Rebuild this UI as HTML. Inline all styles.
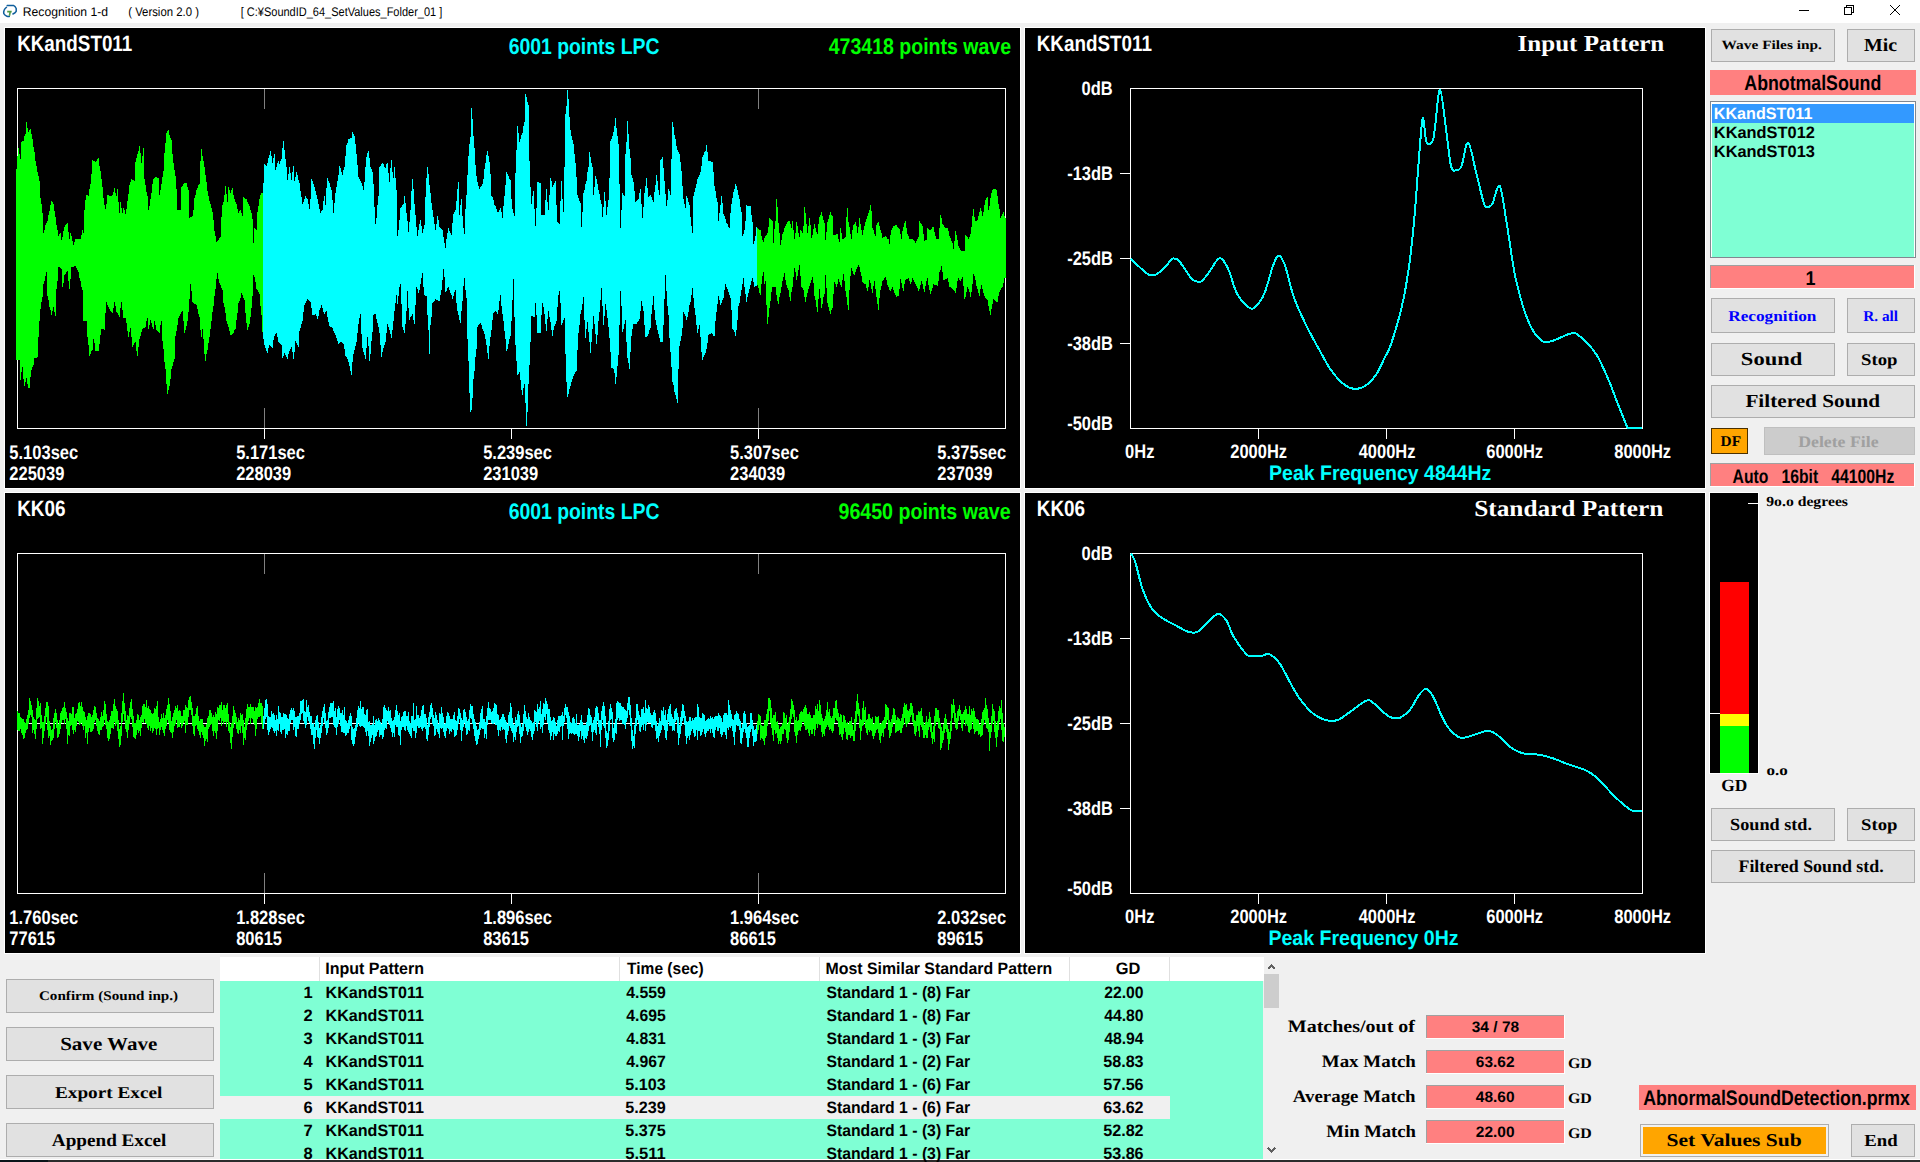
<!DOCTYPE html><html><head><meta charset="utf-8"><title>Recognition 1-d</title><style>html,body{margin:0;padding:0;background:#f0f0f0;width:1920px;height:1162px;overflow:hidden}svg{display:block}text{shape-rendering:auto}</style></head><body><svg width="1920" height="1162" viewBox="0 0 1920 1162" shape-rendering="crispEdges" text-rendering="geometricPrecision"><rect x="0" y="0" width="1920" height="1162" fill="#f0f0f0"/>
<rect x="0" y="0" width="1920" height="23" fill="#fff"/>
<rect x="0" y="1159" width="1920" height="1" fill="#fff"/>
<rect x="0" y="1160" width="1920" height="2" fill="#2b2b2b"/>
<rect x="0" y="1160" width="48" height="2" fill="#0a1419"/>
<g fill="none" stroke="#0f5e9c" stroke-width="1.5" stroke-linecap="round" stroke-linejoin="round" shape-rendering="auto"><path d="M7.2 5.4 H13.4 Q15.2 6.2 16.2 8.5 V11.3 Q15.2 12.9 12.9 14"/><path d="M6.5 7.3 Q4.8 8.8 4.2 10 Q3.4 12 3.8 13.6 Q5 15.6 6.9 16.2 Q8 16.6 9.3 16.5"/></g>
<path d="M7.2 11.6 H11.7 M10.2 11.8 L9.4 15.8" stroke="#4f9a45" stroke-width="1.6" fill="none" shape-rendering="auto"/>
<rect x="1799" y="9.5" width="10" height="1" fill="#000"/>
<path d="M1844.5 7.5 h7 v7 h-7 z M1846.5 7.5 v-2 h7 v7 h-2" fill="none" stroke="#000" stroke-width="1"/>
<path d="M1890 5 L1900 15 M1900 5 L1890 15" stroke="#000" stroke-width="1.1"/>
<rect x="4.5" y="27.5" width="1016" height="461" fill="#000" stroke="#fff" stroke-width="1"/>
<rect x="1024.5" y="27.5" width="681" height="461" fill="#000" stroke="#fff" stroke-width="1"/>
<rect x="4.5" y="492.5" width="1016" height="461" fill="#000" stroke="#fff" stroke-width="1"/>
<rect x="1024.5" y="492.5" width="681" height="461" fill="#000" stroke="#fff" stroke-width="1"/>
<rect x="264" y="89" width="1" height="20" fill="#808080"/>
<rect x="264" y="408" width="1" height="20" fill="#808080"/>
<rect x="264" y="429" width="1" height="10" fill="#fff"/>
<rect x="511" y="429" width="1" height="10" fill="#fff"/>
<rect x="758" y="89" width="1" height="20" fill="#808080"/>
<rect x="758" y="408" width="1" height="20" fill="#808080"/>
<rect x="758" y="429" width="1" height="10" fill="#fff"/>
<rect x="17.5" y="88.5" width="988" height="340" fill="none" stroke="#fff" stroke-width="1"/>
<rect x="264" y="554" width="1" height="20" fill="#808080"/>
<rect x="264" y="873" width="1" height="20" fill="#808080"/>
<rect x="264" y="894" width="1" height="10" fill="#fff"/>
<rect x="511" y="894" width="1" height="10" fill="#fff"/>
<rect x="758" y="554" width="1" height="20" fill="#808080"/>
<rect x="758" y="873" width="1" height="20" fill="#808080"/>
<rect x="758" y="894" width="1" height="10" fill="#fff"/>
<rect x="17.5" y="553.5" width="988" height="340" fill="none" stroke="#fff" stroke-width="1"/>
<rect x="17" y="723" width="988" height="1" fill="#fff"/>
<path d="M16 169 H16 V169 H17 H17 V156 H18 H18 V148 H19 H19 V154 H20 H20 V159 H21 H21 V142 H22 H22 V141 H23 H23 V141 H24 H24 V136 H25 H25 V134 H26 H26 V122 H27 H27 V128 H28 H28 V132 H29 H29 V130 H30 H30 V129 H31 H31 V134 H32 H32 V139 H33 H33 V147 H34 H34 V152 H35 H35 V161 H36 H36 V166 H37 H37 V172 H38 H38 V176 H39 H39 V181 H40 H40 V198 H41 H41 V204 H42 H42 V213 H43 H43 V233 H44 H44 V230 H45 H45 V225 H46 H46 V223 H47 H47 V221 H48 H48 V215 H49 H49 V211 H50 H50 V205 H51 H51 V201 H52 H52 V202 H53 H53 V204 H54 H54 V211 H55 H55 V217 H56 H56 V225 H57 H57 V230 H58 H58 V236 H59 H59 V234 H60 H60 V233 H61 H61 V240 H62 H62 V237 H63 H63 V231 H64 H64 V227 H65 H65 V225 H66 H66 V224 H67 H67 V223 H68 H68 V232 H69 H69 V239 H70 H70 V233 H71 H71 V236 H72 H72 V241 H73 H73 V245 H74 H74 V242 H75 H75 V239 H76 H76 V239 H77 H77 V239 H78 H78 V239 H79 H79 V239 H80 H80 V239 H81 H81 V235 H82 H82 V230 H83 H83 V233 H84 H84 V210 H85 H85 V200 H86 H86 V195 H87 H87 V195 H88 H88 V196 H89 H89 V189 H90 H90 V184 H91 H91 V174 H92 H92 V160 H93 H93 V161 H94 H94 V161 H95 H95 V162 H96 H96 V161 H97 H97 V159 H98 H98 V158 H99 H99 V166 H100 H100 V171 H101 H101 V179 H102 H102 V187 H103 H103 V198 H104 H104 V205 H105 H105 V209 H106 H106 V204 H107 H107 V195 H108 H108 V195 H109 H109 V196 H110 H110 V196 H111 H111 V196 H112 H112 V195 H113 H113 V192 H114 H114 V188 H115 H115 V193 H116 H116 V196 H117 H117 V189 H118 H118 V202 H119 H119 V213 H120 H120 V202 H121 H121 V208 H122 H122 V213 H123 H123 V208 H124 H124 V210 H125 H125 V214 H126 H126 V209 H127 H127 V201 H128 H128 V194 H129 H129 V185 H130 H130 V182 H131 H131 V179 H132 H132 V180 H133 H133 V180 H134 H134 V181 H135 H135 V162 H136 H136 V158 H137 H137 V154 H138 H138 V151 H139 H139 V146 H140 H140 V153 H141 H141 V163 H142 H142 V156 H143 H143 V148 H144 H144 V179 H145 H145 V185 H146 H146 V192 H147 H147 V196 H148 H148 V210 H149 H149 V206 H150 H150 V199 H151 H151 V193 H152 H152 V184 H153 H153 V179 H154 H154 V178 H155 H155 V177 H156 H156 V177 H157 H157 V178 H158 H158 V178 H159 H159 V195 H160 H160 V190 H161 H161 V184 H162 H162 V177 H163 H163 V171 H164 H164 V153 H165 H165 V143 H166 H166 V133 H167 H167 V131 H168 H168 V130 H169 H169 V135 H170 H170 V138 H171 H171 V140 H172 H172 V154 H173 H173 V163 H174 H174 V170 H175 H175 V176 H176 H176 V189 H177 H177 V210 H178 H178 V210 H179 H179 V210 H180 H180 V210 H181 H181 V187 H182 H182 V186 H183 H183 V184 H184 H184 V183 H185 H185 V183 H186 H186 V183 H187 H187 V187 H188 H188 V190 H189 H189 V218 H190 H190 V217 H191 H191 V217 H192 H192 V216 H193 H193 V210 H194 H194 V198 H195 H195 V195 H196 H196 V190 H197 H197 V188 H198 H198 V185 H199 H199 V184 H200 H200 V161 H201 H201 V149 H202 H202 V156 H203 H203 V161 H204 H204 V167 H205 H205 V175 H206 H206 V182 H207 H207 V191 H208 H208 V196 H209 H209 V201 H210 H210 V204 H211 H211 V208 H212 H212 V212 H213 H213 V220 H214 H214 V231 H215 H215 V236 H216 H216 V242 H217 H217 V241 H218 H218 V240 H219 H219 V238 H220 H220 V237 H221 H221 V217 H222 H222 V205 H223 H223 V202 H224 H224 V195 H225 H225 V186 H226 H226 V194 H227 H227 V202 H228 H228 V187 H229 H229 V190 H230 H230 V193 H231 H231 V190 H232 H232 V188 H233 H233 V195 H234 H234 V199 H235 H235 V202 H236 H236 V204 H237 H237 V209 H238 H238 V213 H239 H239 V211 H240 H240 V210 H241 H241 V213 H242 H242 V216 H243 H243 V197 H244 H244 V198 H245 H245 V199 H246 H246 V199 H247 H247 V202 H248 H248 V204 H249 H249 V206 H250 H250 V210 H251 H251 V213 H252 H252 V219 H253 H253 V243 H254 H254 V228 H255 H255 V229 H256 H256 V230 H257 H257 V212 H258 H258 V206 H259 H259 V199 H260 H260 V195 H261 H261 V193 H262 H262 V193 H263 V332 H262 V315 H261 V306 H260 V294 H259 V292 H258 V290 H257 V289 H256 V282 H255 V277 H254 V275 H253 V296 H252 V308 H251 V317 H250 V324 H249 V327 H248 V330 H247 V323 H246 V313 H245 V300 H244 V298 H243 V295 H242 V293 H241 V298 H240 V301 H239 V303 H238 V313 H237 V320 H236 V329 H235 V330 H234 V333 H233 V334 H232 V335 H231 V335 H230 V331 H229 V327 H228 V324 H227 V321 H226 V313 H225 V307 H224 V303 H223 V290 H222 V288 H221 V285 H220 V283 H219 V279 H218 V273 H217 V279 H216 V289 H215 V296 H214 V306 H213 V312 H212 V321 H211 V329 H210 V337 H209 V343 H208 V350 H207 V354 H206 V361 H205 V354 H204 V339 H203 V329 H202 V337 H201 V330 H200 V317 H199 V314 H198 V309 H197 V305 H196 V304 H195 V304 H194 V303 H193 V302 H192 V291 H191 V284 H190 V299 H189 V312 H188 V321 H187 V326 H186 V330 H185 V333 H184 V321 H183 V311 H182 V312 H181 V314 H180 V316 H179 V318 H178 V325 H177 V331 H176 V336 H175 V359 H174 V362 H173 V366 H172 V369 H171 V379 H170 V386 H169 V390 H168 V394 H167 V384 H166 V369 H165 V362 H164 V349 H163 V341 H162 V321 H161 V325 H160 V333 H159 V332 H158 V331 H157 V330 H156 V325 H155 V321 H154 V329 H153 V327 H152 V323 H151 V320 H150 V325 H149 V329 H148 V318 H147 V321 H146 V327 H145 V328 H144 V328 H143 V329 H142 V332 H141 V336 H140 V339 H139 V347 H138 V356 H137 V351 H136 V342 H135 V343 H134 V345 H133 V347 H132 V337 H131 V328 H130 V332 H129 V337 H128 V331 H127 V323 H126 V318 H125 V318 H124 V318 H123 V310 H122 V302 H121 V308 H120 V317 H119 V315 H118 V313 H117 V312 H116 V306 H115 V302 H114 V308 H113 V313 H112 V312 H111 V311 H110 V309 H109 V307 H108 V305 H107 V302 H106 V313 H105 V330 H104 V329 H103 V329 H102 V329 H101 V335 H100 V344 H99 V351 H98 V351 H97 V351 H96 V351 H95 V343 H94 V339 H93 V350 H92 V351 H91 V354 H90 V356 H89 V345 H88 V337 H87 V321 H86 V321 H85 V321 H84 V321 H83 V290 H82 V287 H81 V281 H80 V278 H79 V272 H78 V270 H77 V268 H76 V266 H75 V266 H74 V267 H73 V267 H72 V267 H71 V279 H70 V289 H69 V281 H68 V271 H67 V272 H66 V274 H65 V275 H64 V283 H63 V287 H62 V269 H61 V268 H60 V267 H59 V267 H58 V281 H57 V289 H56 V316 H55 V312 H54 V307 H53 V311 H52 V315 H51 V310 H50 V307 H49 V300 H48 V296 H47 V272 H46 V276 H45 V281 H44 V284 H43 V297 H42 V302 H41 V309 H40 V321 H39 V337 H38 V357 H37 V358 H36 V358 H35 V358 H34 V365 H33 V367 H32 V370 H31 V377 H30 V388 H29 V388 H28 V384 H27 V378 H26 V382 H25 V386 H24 V379 H23 V367 H22 V372 H21 V380 H20 V360 H19 V360 H18 V360 H17 V360 H16 Z" fill="#0f0"/>
<path d="M263 183 H263 V183 H264 H264 V164 H265 H265 V165 H266 H266 V166 H267 H267 V163 H268 H268 V158 H269 H269 V155 H270 H270 V151 H271 H271 V156 H272 H272 V163 H273 H273 V158 H274 H274 V154 H275 H275 V170 H276 H276 V167 H277 H277 V163 H278 H278 V161 H279 H279 V164 H280 H280 V161 H281 H281 V159 H282 H282 V148 H283 H283 V141 H284 H284 V150 H285 H285 V159 H286 H286 V167 H287 H287 V180 H288 H288 V174 H289 H289 V167 H290 H290 V173 H291 H291 V180 H292 H292 V172 H293 H293 V166 H294 H294 V181 H295 H295 V177 H296 H296 V172 H297 H297 V175 H298 H298 V180 H299 H299 V183 H300 H300 V191 H301 H301 V197 H302 H302 V204 H303 H303 V202 H304 H304 V199 H305 H305 V196 H306 H306 V198 H307 H307 V199 H308 H308 V204 H309 H309 V209 H310 H310 V199 H311 H311 V179 H312 H312 V181 H313 H313 V184 H314 H314 V187 H315 H315 V191 H316 H316 V195 H317 H317 V199 H318 H318 V204 H319 H319 V209 H320 H320 V213 H321 H321 V211 H322 H322 V210 H323 H323 V201 H324 H324 V196 H325 H325 V205 H326 H326 V188 H327 H327 V178 H328 H328 V181 H329 H329 V183 H330 H330 V187 H331 H331 V190 H332 H332 V200 H333 H333 V213 H334 H334 V203 H335 H335 V193 H336 H336 V187 H337 H337 V181 H338 H338 V175 H339 H339 V166 H340 H340 V168 H341 H341 V172 H342 H342 V175 H343 H343 V170 H344 H344 V167 H345 H345 V156 H346 H346 V145 H347 H347 V143 H348 H348 V139 H349 H349 V139 H350 H350 V138 H351 H351 V138 H352 H352 V132 H353 H353 V134 H354 H354 V136 H355 H355 V144 H356 H356 V154 H357 H357 V165 H358 H358 V177 H359 H359 V179 H360 H360 V181 H361 H361 V183 H362 H362 V186 H363 H363 V190 H364 H364 V182 H365 H365 V167 H366 H366 V157 H367 H367 V153 H368 H368 V151 H369 H369 V158 H370 H370 V167 H371 H371 V169 H372 H372 V172 H373 H373 V184 H374 H374 V207 H375 H375 V224 H376 H376 V218 H377 H377 V205 H378 H378 V196 H379 H379 V167 H380 H380 V166 H381 H381 V164 H382 H382 V163 H383 H383 V164 H384 H384 V167 H385 H385 V168 H386 H386 V164 H387 H387 V163 H388 H388 V173 H389 H389 V182 H390 H390 V168 H391 H391 V160 H392 H392 V172 H393 H393 V178 H394 H394 V167 H395 H395 V178 H396 H396 V190 H397 H397 V236 H398 H398 V230 H399 H399 V220 H400 H400 V208 H401 H401 V207 H402 H402 V205 H403 H403 V204 H404 H404 V196 H405 H405 V203 H406 H406 V213 H407 H407 V221 H408 H408 V232 H409 H409 V222 H410 H410 V210 H411 H411 V191 H412 H412 V179 H413 H413 V189 H414 H414 V204 H415 H415 V215 H416 H416 V227 H417 H417 V236 H418 H418 V230 H419 H419 V224 H420 H420 V220 H421 H421 V226 H422 H422 V233 H423 H423 V229 H424 H424 V225 H425 H425 V197 H426 H426 V178 H427 H427 V167 H428 H428 V174 H429 H429 V185 H430 H430 V193 H431 H431 V203 H432 H432 V210 H433 H433 V217 H434 H434 V224 H435 H435 V230 H436 H436 V224 H437 H437 V216 H438 H438 V220 H439 H439 V227 H440 H440 V228 H441 H441 V229 H442 H442 V230 H443 H443 V237 H444 H444 V243 H445 H445 V248 H446 H446 V239 H447 H447 V233 H448 H448 V228 H449 H449 V231 H450 H450 V233 H451 H451 V235 H452 H452 V223 H453 H453 V214 H454 H454 V212 H455 H455 V210 H456 H456 V201 H457 H457 V189 H458 H458 V182 H459 H459 V215 H460 H460 V205 H461 H461 V199 H462 H462 V216 H463 H463 V228 H464 H464 V234 H465 H465 V209 H466 H466 V195 H467 H467 V175 H468 H468 V156 H469 H469 V144 H470 H470 V137 H471 H471 V108 H472 H472 V119 H473 H473 V136 H474 H474 V148 H475 H475 V165 H476 H476 V176 H477 H477 V182 H478 H478 V186 H479 H479 V189 H480 H480 V187 H481 H481 V186 H482 H482 V184 H483 H483 V179 H484 H484 V169 H485 H485 V163 H486 H486 V155 H487 H487 V151 H488 H488 V156 H489 H489 V162 H490 H490 V174 H491 H491 V196 H492 H492 V197 H493 H493 V200 H494 H494 V205 H495 H495 V206 H496 H496 V209 H497 H497 V212 H498 H498 V212 H499 H499 V210 H500 H500 V208 H501 H501 V212 H502 H502 V218 H503 H503 V206 H504 H504 V196 H505 H505 V185 H506 H506 V172 H507 H507 V174 H508 H508 V176 H509 H509 V179 H510 H510 V180 H511 H511 V199 H512 H512 V209 H513 H513 V213 H514 H514 V216 H515 H515 V173 H516 H516 V150 H517 H517 V126 H518 H518 V133 H519 H519 V142 H520 H520 V139 H521 H521 V135 H522 H522 V133 H523 H523 V126 H524 H524 V122 H525 H525 V94 H526 H526 V97 H527 H527 V102 H528 H528 V105 H529 H529 V161 H530 H530 V187 H531 H531 V204 H532 H532 V196 H533 H533 V191 H534 H534 V209 H535 H535 V226 H536 H536 V208 H537 H537 V182 H538 H538 V182 H539 H539 V183 H540 H540 V183 H541 H541 V215 H542 H542 V215 H543 H543 V215 H544 H544 V215 H545 H545 V200 H546 H546 V189 H547 H547 V202 H548 H548 V210 H549 H549 V195 H550 H550 V178 H551 H551 V181 H552 H552 V187 H553 H553 V185 H554 H554 V183 H555 H555 V181 H556 H556 V205 H557 H557 V222 H558 H558 V223 H559 H559 V224 H560 H560 V201 H561 H561 V181 H562 H562 V199 H563 H563 V212 H564 H564 V167 H565 H565 V114 H566 H566 V106 H567 H567 V90 H568 H568 V99 H569 H569 V117 H570 H570 V130 H571 H571 V136 H572 H572 V140 H573 H573 V144 H574 H574 V154 H575 H575 V163 H576 H576 V177 H577 H577 V195 H578 H578 V198 H579 H579 V201 H580 H580 V203 H581 H581 V227 H582 H582 V212 H583 H583 V193 H584 H584 V190 H585 H585 V184 H586 H586 V181 H587 H587 V172 H588 H588 V167 H589 H589 V152 H590 H590 V157 H591 H591 V163 H592 H592 V167 H593 H593 V195 H594 H594 V187 H595 H595 V176 H596 H596 V179 H597 H597 V184 H598 H598 V190 H599 H599 V194 H600 H600 V200 H601 H601 V204 H602 H602 V217 H603 H603 V207 H604 H604 V192 H605 H605 V201 H606 H606 V215 H607 H607 V207 H608 H608 V200 H609 H609 V178 H610 H610 V141 H611 H611 V139 H612 H612 V136 H613 H613 V132 H614 H614 V126 H615 H615 V118 H616 H616 V128 H617 H617 V136 H618 H618 V144 H619 H619 V184 H620 H620 V228 H621 H621 V210 H622 H622 V193 H623 H623 V195 H624 H624 V196 H625 H625 V154 H626 H626 V142 H627 H627 V121 H628 H628 V134 H629 H629 V149 H630 H630 V158 H631 H631 V175 H632 H632 V178 H633 H633 V182 H634 H634 V191 H635 H635 V202 H636 H636 V201 H637 H637 V200 H638 H638 V199 H639 H639 V193 H640 H640 V189 H641 H641 V204 H642 H642 V218 H643 H643 V207 H644 H644 V193 H645 H645 V186 H646 H646 V178 H647 H647 V188 H648 H648 V197 H649 H649 V196 H650 H650 V195 H651 H651 V197 H652 H652 V200 H653 H653 V202 H654 H654 V192 H655 H655 V185 H656 H656 V175 H657 H657 V181 H658 H658 V190 H659 H659 V195 H660 H660 V160 H661 H661 V159 H662 H662 V157 H663 H663 V168 H664 H664 V181 H665 H665 V194 H666 H666 V206 H667 H667 V200 H668 H668 V189 H669 H669 V191 H670 H670 V195 H671 H671 V159 H672 H672 V122 H673 H673 V127 H674 H674 V135 H675 H675 V139 H676 H676 V146 H677 H677 V150 H678 H678 V152 H679 H679 V154 H680 H680 V162 H681 H681 V171 H682 H682 V186 H683 H683 V199 H684 H684 V204 H685 H685 V208 H686 H686 V196 H687 H687 V198 H688 H688 V202 H689 H689 V205 H690 H690 V217 H691 H691 V226 H692 H692 V233 H693 H693 V196 H694 H694 V192 H695 H695 V188 H696 H696 V184 H697 H697 V179 H698 H698 V177 H699 H699 V175 H700 H700 V172 H701 H701 V166 H702 H702 V157 H703 H703 V155 H704 H704 V152 H705 H705 V151 H706 H706 V145 H707 H707 V152 H708 H708 V161 H709 H709 V161 H710 H710 V161 H711 H711 V162 H712 H712 V162 H713 H713 V172 H714 H714 V186 H715 H715 V191 H716 H716 V198 H717 H717 V202 H718 H718 V221 H719 H719 V213 H720 H720 V205 H721 H721 V196 H722 H722 V203 H723 H723 V214 H724 H724 V216 H725 H725 V219 H726 H726 V223 H727 H727 V224 H728 H728 V227 H729 H729 V228 H730 H730 V213 H731 H731 V204 H732 H732 V198 H733 H733 V192 H734 H734 V189 H735 H735 V184 H736 H736 V186 H737 H737 V190 H738 H738 V195 H739 H739 V199 H740 H740 V207 H741 H741 V212 H742 H742 V236 H743 H743 V234 H744 H744 V230 H745 H745 V221 H746 H746 V205 H747 H747 V206 H748 H748 V206 H749 H749 V206 H750 H750 V206 H751 H751 V215 H752 H752 V222 H753 H753 V244 H754 H754 V241 H755 H755 V236 H756 H756 V227 H757 V286 H756 V286 H755 V287 H754 V282 H753 V278 H752 V281 H751 V285 H750 V289 H749 V293 H748 V297 H747 V302 H746 V294 H745 V287 H744 V278 H743 V284 H742 V290 H741 V296 H740 V303 H739 V306 H738 V320 H737 V330 H736 V336 H735 V332 H734 V330 H733 V329 H732 V310 H731 V298 H730 V295 H729 V292 H728 V289 H727 V287 H726 V284 H725 V290 H724 V298 H723 V300 H722 V303 H721 V305 H720 V300 H719 V296 H718 V304 H717 V312 H716 V321 H715 V336 H714 V336 H713 V334 H712 V333 H711 V334 H710 V334 H709 V335 H708 V343 H707 V349 H706 V353 H705 V355 H704 V357 H703 V360 H702 V352 H701 V337 H700 V325 H699 V329 H698 V333 H697 V325 H696 V315 H695 V308 H694 V298 H693 V288 H692 V295 H691 V302 H690 V305 H689 V312 H688 V317 H687 V320 H686 V316 H685 V314 H684 V312 H683 V328 H682 V336 H681 V341 H680 V346 H679 V369 H678 V403 H677 V399 H676 V395 H675 V392 H674 V385 H673 V382 H672 V367 H671 V352 H670 V338 H669 V315 H668 V306 H667 V291 H666 V275 H665 V299 H664 V325 H663 V342 H662 V342 H661 V342 H660 V338 H659 V334 H658 V330 H657 V325 H656 V320 H655 V310 H654 V296 H653 V305 H652 V314 H651 V328 H650 V330 H649 V334 H648 V336 H647 V337 H646 V337 H645 V325 H644 V311 H643 V306 H642 V301 H641 V311 H640 V319 H639 V321 H638 V322 H637 V324 H636 V324 H635 V324 H634 V324 H633 V329 H632 V336 H631 V352 H630 V369 H629 V363 H628 V358 H627 V342 H626 V320 H625 V324 H624 V329 H623 V332 H622 V306 H621 V291 H620 V325 H619 V355 H618 V366 H617 V377 H616 V384 H615 V373 H614 V369 H613 V368 H612 V368 H611 V352 H610 V338 H609 V327 H608 V318 H607 V310 H606 V304 H605 V316 H604 V325 H603 V306 H602 V288 H601 V300 H600 V312 H599 V321 H598 V335 H597 V344 H596 V334 H595 V324 H594 V316 H593 V329 H592 V342 H591 V353 H590 V342 H589 V332 H588 V322 H587 V329 H586 V338 H585 V320 H584 V297 H583 V304 H582 V310 H581 V314 H580 V325 H579 V333 H578 V350 H577 V371 H576 V372 H575 V374 H574 V376 H573 V379 H572 V382 H571 V386 H570 V389 H569 V394 H568 V397 H567 V382 H566 V354 H565 V318 H564 V320 H563 V323 H562 V325 H561 V303 H560 V291 H559 V295 H558 V307 H557 V321 H556 V324 H555 V326 H554 V330 H553 V336 H552 V330 H551 V322 H550 V317 H549 V311 H548 V319 H547 V331 H546 V324 H545 V314 H544 V307 H543 V303 H542 V315 H541 V333 H540 V333 H539 V333 H538 V333 H537 V315 H536 V303 H535 V317 H534 V317 H533 V316 H532 V316 H531 V342 H530 V365 H529 V384 H528 V412 H527 V426 H526 V403 H525 V384 H524 V388 H523 V395 H522 V390 H521 V380 H520 V372 H519 V374 H518 V375 H517 V361 H516 V345 H515 V317 H514 V279 H513 V300 H512 V321 H511 V336 H510 V339 H509 V344 H508 V349 H507 V351 H506 V339 H505 V331 H504 V321 H503 V314 H502 V306 H501 V295 H500 V301 H499 V310 H498 V314 H497 V312 H496 V311 H495 V312 H494 V313 H493 V320 H492 V330 H491 V337 H490 V346 H489 V359 H488 V353 H487 V345 H486 V339 H485 V334 H484 V331 H483 V329 H482 V325 H481 V323 H480 V324 H479 V325 H478 V327 H477 V349 H476 V357 H475 V371 H474 V379 H473 V398 H472 V410 H471 V412 H470 V393 H469 V361 H468 V339 H467 V298 H466 V290 H465 V278 H464 V286 H463 V301 H462 V311 H461 V323 H460 V320 H459 V315 H458 V311 H457 V303 H456 V290 H455 V292 H454 V296 H453 V299 H452 V295 H451 V293 H450 V290 H449 V287 H448 V288 H447 V291 H446 V292 H445 V277 H444 V269 H443 V280 H442 V290 H441 V295 H440 V301 H439 V301 H438 V300 H437 V300 H436 V299 H435 V301 H434 V302 H433 V303 H432 V317 H431 V325 H430 V354 H429 V330 H428 V315 H427 V296 H426 V296 H425 V295 H424 V287 H423 V273 H422 V278 H421 V284 H420 V290 H419 V293 H418 V289 H417 V287 H416 V305 H415 V324 H414 V320 H413 V314 H412 V316 H411 V317 H410 V320 H409 V308 H408 V291 H407 V311 H406 V324 H405 V333 H404 V330 H403 V327 H402 V304 H401 V284 H400 V287 H399 V296 H398 V304 H397 V295 H396 V303 H395 V311 H394 V321 H393 V330 H392 V338 H391 V334 H390 V330 H389 V327 H388 V324 H387 V333 H386 V342 H385 V345 H384 V348 H383 V352 H382 V357 H381 V345 H380 V333 H379 V327 H378 V323 H377 V319 H376 V314 H375 V314 H374 V315 H373 V332 H372 V341 H371 V354 H370 V361 H369 V346 H368 V337 H367 V348 H366 V359 H365 V355 H364 V352 H363 V348 H362 V334 H361 V314 H360 V318 H359 V324 H358 V333 H357 V342 H356 V346 H355 V350 H354 V354 H353 V362 H352 V375 H351 V371 H350 V366 H349 V362 H348 V359 H347 V357 H346 V356 H345 V349 H344 V344 H343 V343 H342 V342 H341 V342 H340 V343 H339 V344 H338 V341 H337 V338 H336 V335 H335 V333 H334 V331 H333 V328 H332 V327 H331 V327 H330 V326 H329 V322 H328 V317 H327 V311 H326 V312 H325 V314 H324 V312 H323 V308 H322 V305 H321 V308 H320 V310 H319 V316 H318 V319 H317 V316 H316 V314 H315 V315 H314 V315 H313 V315 H312 V308 H311 V302 H310 V301 H309 V300 H308 V299 H307 V301 H306 V303 H305 V305 H304 V312 H303 V321 H302 V324 H301 V328 H300 V331 H299 V347 H298 V345 H297 V343 H296 V341 H295 V352 H294 V359 H293 V352 H292 V347 H291 V349 H290 V351 H289 V354 H288 V359 H287 V357 H286 V355 H285 V353 H284 V356 H283 V358 H282 V345 H281 V344 H280 V343 H279 V342 H278 V337 H277 V333 H276 V334 H275 V336 H274 V340 H273 V348 H272 V347 H271 V346 H270 V345 H269 V348 H268 V353 H267 V351 H266 V348 H265 V345 H264 V339 H263 Z" fill="#0ff"/>
<path d="M757 228 H757 V228 H758 H758 V229 H759 H759 V230 H760 H760 V230 H761 H761 V236 H762 H762 V240 H763 H763 V242 H764 H764 V238 H765 H765 V236 H766 H766 V235 H767 H767 V233 H768 H768 V227 H769 H769 V218 H770 H770 V219 H771 H771 V220 H772 H772 V221 H773 H773 V243 H774 H774 V229 H775 H775 V221 H776 H776 V199 H777 H777 V207 H778 H778 V223 H779 H779 V233 H780 H780 V245 H781 H781 V240 H782 H782 V234 H783 H783 V232 H784 H784 V228 H785 H785 V226 H786 H786 V224 H787 H787 V222 H788 H788 V221 H789 H789 V221 H790 H790 V224 H791 H791 V228 H792 H792 V221 H793 H793 V230 H794 H794 V239 H795 H795 V233 H796 H796 V222 H797 H797 V226 H798 H798 V233 H799 H799 V237 H800 H800 V230 H801 H801 V231 H802 H802 V233 H803 H803 V226 H804 H804 V207 H805 H805 V213 H806 H806 V224 H807 H807 V233 H808 H808 V226 H809 H809 V218 H810 H810 V225 H811 H811 V238 H812 H812 V235 H813 H813 V229 H814 H814 V224 H815 H815 V228 H816 H816 V232 H817 H817 V234 H818 H818 V224 H819 H819 V217 H820 H820 V215 H821 H821 V212 H822 H822 V216 H823 H823 V220 H824 H824 V223 H825 H825 V240 H826 H826 V232 H827 H827 V222 H828 H828 V219 H829 H829 V215 H830 H830 V212 H831 H831 V215 H832 H832 V216 H833 H833 V235 H834 H834 V235 H835 H835 V235 H836 H836 V234 H837 H837 V234 H838 H838 V239 H839 H839 V242 H840 H840 V228 H841 H841 V233 H842 H842 V239 H843 H843 V239 H844 H844 V238 H845 H845 V237 H846 H846 V217 H847 H847 V208 H848 H848 V222 H849 H849 V227 H850 H850 V234 H851 H851 V239 H852 H852 V230 H853 H853 V225 H854 H854 V224 H855 H855 V222 H856 H856 V226 H857 H857 V233 H858 H858 V227 H859 H859 V218 H860 H860 V224 H861 H861 V230 H862 H862 V235 H863 H863 V230 H864 H864 V226 H865 H865 V222 H866 H866 V219 H867 H867 V216 H868 H868 V213 H869 H869 V210 H870 H870 V205 H871 H871 V211 H872 H872 V228 H873 H873 V230 H874 H874 V234 H875 H875 V236 H876 H876 V225 H877 H877 V223 H878 H878 V222 H879 H879 V226 H880 H880 V230 H881 H881 V233 H882 H882 V238 H883 H883 V237 H884 H884 V237 H885 H885 V236 H886 H886 V237 H887 H887 V239 H888 H888 V239 H889 H889 V244 H890 H890 V235 H891 H891 V230 H892 H892 V228 H893 H893 V226 H894 H894 V226 H895 H895 V225 H896 H896 V225 H897 H897 V227 H898 H898 V228 H899 H899 V229 H900 H900 V234 H901 H901 V239 H902 H902 V231 H903 H903 V227 H904 H904 V223 H905 H905 V221 H906 H906 V228 H907 H907 V234 H908 H908 V236 H909 H909 V239 H910 H910 V239 H911 H911 V239 H912 H912 V239 H913 H913 V240 H914 H914 V241 H915 H915 V243 H916 H916 V241 H917 H917 V239 H918 H918 V237 H919 H919 V221 H920 H920 V223 H921 H921 V224 H922 H922 V226 H923 H923 V234 H924 H924 V241 H925 H925 V240 H926 H926 V240 H927 H927 V228 H928 H928 V229 H929 H929 V230 H930 H930 V230 H931 H931 V229 H932 H932 V227 H933 H933 V227 H934 H934 V232 H935 H935 V236 H936 H936 V239 H937 H937 V239 H938 H938 V239 H939 H939 V228 H940 H940 V215 H941 H941 V218 H942 H942 V224 H943 H943 V225 H944 H944 V227 H945 H945 V228 H946 H946 V228 H947 H947 V228 H948 H948 V231 H949 H949 V236 H950 H950 V238 H951 H951 V241 H952 H952 V243 H953 H953 V249 H954 H954 V241 H955 H955 V231 H956 H956 V235 H957 H957 V240 H958 H958 V246 H959 H959 V248 H960 H960 V250 H961 H961 V251 H962 H962 V251 H963 H963 V251 H964 H964 V251 H965 H965 V235 H966 H966 V236 H967 H967 V237 H968 H968 V239 H969 H969 V237 H970 H970 V234 H971 H971 V227 H972 H972 V216 H973 H973 V209 H974 H974 V217 H975 H975 V221 H976 H976 V221 H977 H977 V220 H978 H978 V216 H979 H979 V212 H980 H980 V208 H981 H981 V211 H982 H982 V216 H983 H983 V212 H984 H984 V205 H985 H985 V200 H986 H986 V198 H987 H987 V197 H988 H988 V210 H989 H989 V206 H990 H990 V198 H991 H991 V193 H992 H992 V190 H993 H993 V189 H994 H994 V189 H995 H995 V189 H996 H996 V190 H997 H997 V196 H998 H998 V204 H999 H999 V209 H1000 H1000 V218 H1001 H1001 V216 H1002 H1002 V214 H1003 H1003 V212 H1004 H1004 V216 H1005 H1005 V218 H1006 V278 H1005 V278 H1004 V283 H1003 V287 H1002 V288 H1001 V290 H1000 V292 H999 V296 H998 V302 H997 V302 H996 V301 H995 V300 H994 V299 H993 V304 H992 V309 H991 V315 H990 V311 H989 V306 H988 V300 H987 V299 H986 V298 H985 V296 H984 V293 H983 V289 H982 V285 H981 V289 H980 V296 H979 V293 H978 V289 H977 V286 H976 V280 H975 V276 H974 V274 H973 V284 H972 V292 H971 V297 H970 V292 H969 V289 H968 V287 H967 V292 H966 V297 H965 V299 H964 V286 H963 V277 H962 V279 H961 V281 H960 V280 H959 V278 H958 V281 H957 V288 H956 V293 H955 V291 H954 V290 H953 V289 H952 V288 H951 V287 H950 V287 H949 V282 H948 V278 H947 V279 H946 V279 H945 V280 H944 V280 H943 V272 H942 V266 H941 V270 H940 V272 H939 V281 H938 V286 H937 V285 H936 V285 H935 V285 H934 V284 H933 V288 H932 V291 H931 V294 H930 V290 H929 V285 H928 V278 H927 V281 H926 V286 H925 V292 H924 V289 H923 V284 H922 V281 H921 V285 H920 V289 H919 V291 H918 V288 H917 V286 H916 V284 H915 V282 H914 V280 H913 V278 H912 V282 H911 V284 H910 V281 H909 V278 H908 V279 H907 V279 H906 V280 H905 V284 H904 V291 H903 V288 H902 V283 H901 V279 H900 V289 H899 V296 H898 V296 H897 V297 H896 V295 H895 V293 H894 V290 H893 V287 H892 V289 H891 V291 H890 V290 H889 V287 H888 V285 H887 V280 H886 V277 H885 V278 H884 V280 H883 V281 H882 V286 H881 V290 H880 V298 H879 V310 H878 V304 H877 V297 H876 V289 H875 V281 H874 V286 H873 V293 H872 V289 H871 V283 H870 V280 H869 V287 H868 V291 H867 V288 H866 V284 H865 V284 H864 V283 H863 V282 H862 V276 H861 V272 H860 V267 H859 V265 H858 V267 H857 V269 H856 V272 H855 V275 H854 V274 H853 V271 H852 V268 H851 V276 H850 V290 H849 V310 H848 V305 H847 V297 H846 V291 H845 V281 H844 V274 H843 V280 H842 V287 H841 V285 H840 V282 H839 V279 H838 V284 H837 V287 H836 V284 H835 V282 H834 V294 H833 V308 H832 V310 H831 V314 H830 V311 H829 V307 H828 V303 H827 V288 H826 V275 H825 V294 H824 V297 H823 V304 H822 V308 H821 V298 H820 V289 H819 V299 H818 V312 H817 V307 H816 V300 H815 V296 H814 V283 H813 V277 H812 V280 H811 V283 H810 V286 H809 V289 H808 V293 H807 V297 H806 V302 H805 V297 H804 V290 H803 V288 H802 V287 H801 V276 H800 V265 H799 V270 H798 V276 H797 V280 H796 V272 H795 V268 H794 V277 H793 V287 H792 V292 H791 V301 H790 V297 H789 V290 H788 V288 H787 V285 H786 V280 H785 V273 H784 V277 H783 V281 H782 V287 H781 V293 H780 V297 H779 V304 H778 V301 H777 V295 H776 V287 H775 V287 H774 V287 H773 V287 H772 V292 H771 V301 H770 V308 H769 V317 H768 V324 H767 V305 H766 V281 H765 V284 H764 V272 H763 V276 H762 V284 H761 V295 H760 V293 H759 V288 H758 V285 H757 Z" fill="#0f0"/>
<path d="M17 711 H17 V711 H18 H18 V713 H19 H19 V713 H20 H20 V717 H21 H21 V718 H22 H22 V719 H23 H23 V719 H24 H24 V722 H25 H25 V723 H26 H26 V719 H27 H27 V715 H28 H28 V710 H29 H29 V698 H30 H30 V701 H31 H31 V705 H32 H32 V710 H33 H33 V717 H34 H34 V719 H35 H35 V720 H36 H36 V708 H37 H37 V698 H38 H38 V701 H39 H39 V706 H40 H40 V703 H41 H41 V715 H42 H42 V722 H43 H43 V722 H44 H44 V716 H45 H45 V708 H46 H46 V702 H47 H47 V702 H48 H48 V706 H49 H49 V721 H50 H50 V726 H51 H51 V730 H52 H52 V729 H53 H53 V718 H54 H54 V713 H55 H55 V709 H56 H56 V713 H57 H57 V720 H58 H58 V724 H59 H59 V720 H60 H60 V713 H61 H61 V711 H62 H62 V708 H63 H63 V707 H64 H64 V702 H65 H65 V708 H66 H66 V712 H67 H67 V718 H68 H68 V721 H69 H69 V713 H70 H70 V713 H71 H71 V714 H72 H72 V707 H73 H73 V707 H74 H74 V718 H75 H75 V714 H76 H76 V713 H77 H77 V709 H78 H78 V703 H79 H79 V702 H80 H80 V706 H81 H81 V702 H82 H82 V707 H83 H83 V711 H84 H84 V712 H85 H85 V717 H86 H86 V720 H87 H87 V716 H88 H88 V713 H89 H89 V713 H90 H90 V714 H91 H91 V717 H92 H92 V715 H93 H93 V710 H94 H94 V706 H95 H95 V707 H96 H96 V713 H97 H97 V718 H98 H98 V719 H99 H99 V721 H100 H100 V717 H101 H101 V712 H102 H102 V716 H103 H103 V710 H104 H104 V701 H105 H105 V704 H106 H106 V714 H107 H107 V721 H108 H108 V722 H109 H109 V720 H110 H110 V716 H111 H111 V711 H112 H112 V711 H113 H113 V704 H114 H114 V699 H115 H115 V706 H116 H116 V709 H117 H117 V711 H118 H118 V720 H119 H119 V729 H120 H120 V726 H121 H121 V713 H122 H122 V701 H123 H123 V693 H124 H124 V703 H125 H125 V711 H126 H126 V720 H127 H127 V715 H128 H128 V716 H129 H129 V708 H130 H130 V702 H131 H131 V699 H132 H132 V709 H133 H133 V716 H134 H134 V723 H135 H135 V723 H136 H136 V720 H137 H137 V714 H138 H138 V715 H139 H139 V720 H140 H140 V717 H141 H141 V715 H142 H142 V706 H143 H143 V704 H144 H144 V704 H145 H145 V707 H146 H146 V700 H147 H147 V708 H148 H148 V706 H149 H149 V709 H150 H150 V710 H151 H151 V713 H152 H152 V714 H153 H153 V713 H154 H154 V708 H155 H155 V709 H156 H156 V706 H157 H157 V701 H158 H158 V717 H159 H159 V722 H160 H160 V719 H161 H161 V714 H162 H162 V718 H163 H163 V713 H164 H164 V718 H165 H165 V715 H166 H166 V709 H167 H167 V705 H168 H168 V698 H169 H169 V704 H170 H170 V711 H171 H171 V721 H172 H172 V717 H173 H173 V713 H174 H174 V710 H175 H175 V706 H176 H176 V708 H177 H177 V705 H178 H178 V711 H179 H179 V710 H180 H180 V711 H181 H181 V716 H182 H182 V716 H183 H183 V710 H184 H184 V710 H185 H185 V705 H186 H186 V707 H187 H187 V708 H188 H188 V700 H189 H189 V697 H190 H190 V696 H191 H191 V702 H192 H192 V708 H193 H193 V716 H194 H194 V716 H195 H195 V714 H196 H196 V708 H197 H197 V706 H198 H198 V716 H199 H199 V721 H200 H200 V719 H201 H201 V719 H202 H202 V719 H203 H203 V725 H204 H204 V727 H205 H205 V727 H206 H206 V724 H207 H207 V718 H208 H208 V716 H209 H209 V710 H210 H210 V710 H211 H211 V713 H212 H212 V717 H213 H213 V715 H214 H214 V717 H215 H215 V712 H216 H216 V714 H217 H217 V707 H218 H218 V708 H219 H219 V705 H220 H220 V705 H221 H221 V702 H222 H222 V710 H223 H223 V705 H224 H224 V705 H225 H225 V708 H226 H226 V705 H227 H227 V703 H228 H228 V714 H229 H229 V722 H230 H230 V727 H231 H231 V723 H232 H232 V716 H233 H233 V706 H234 H234 V710 H235 H235 V713 H236 H236 V717 H237 H237 V722 H238 H238 V718 H239 H239 V720 H240 H240 V713 H241 H241 V715 H242 H242 V714 H243 H243 V720 H244 H244 V727 H245 H245 V718 H246 H246 V709 H247 H247 V704 H248 H248 V707 H249 H249 V707 H250 H250 V704 H251 H251 V707 H252 H252 V707 H253 H253 V707 H254 H254 V711 H255 H255 V707 H256 H256 V708 H257 H257 V707 H258 H258 V703 H259 H259 V699 H260 H260 V703 H261 H261 V703 H262 H262 V706 H263 V729 H262 V723 H261 V716 H260 V717 H259 V717 H258 V719 H257 V729 H256 V736 H255 V725 H254 V723 H253 V719 H252 V718 H251 V724 H250 V718 H249 V721 H248 V725 H247 V730 H246 V740 H245 V738 H244 V745 H243 V733 H242 V726 H241 V733 H240 V730 H239 V734 H238 V733 H237 V729 H236 V724 H235 V723 H234 V728 H233 V737 H232 V749 H231 V743 H230 V733 H229 V731 H228 V722 H227 V727 H226 V722 H225 V722 H224 V724 H223 V721 H222 V726 H221 V718 H220 V721 H219 V720 H218 V731 H217 V739 H216 V733 H215 V731 H214 V736 H213 V731 H212 V724 H211 V725 H210 V727 H209 V729 H208 V742 H207 V739 H206 V741 H205 V746 H204 V738 H203 V735 H202 V732 H201 V738 H200 V735 H199 V731 H198 V729 H197 V725 H196 V726 H195 V736 H194 V734 H193 V726 H192 V715 H191 V710 H190 V710 H189 V717 H188 V725 H187 V725 H186 V733 H185 V721 H184 V723 H183 V726 H182 V728 H181 V723 H180 V727 H179 V727 H178 V728 H177 V720 H176 V724 H175 V726 H174 V732 H173 V738 H172 V733 H171 V732 H170 V730 H169 V723 H168 V720 H167 V726 H166 V729 H165 V736 H164 V733 H163 V730 H162 V727 H161 V730 H160 V735 H159 V728 H158 V729 H157 V735 H156 V729 H155 V728 H154 V731 H153 V733 H152 V728 H151 V731 H150 V726 H149 V730 H148 V728 H147 V724 H146 V723 H145 V719 H144 V723 H143 V722 H142 V728 H141 V736 H140 V731 H139 V733 H138 V730 H137 V735 H136 V739 H135 V738 H134 V737 H133 V727 H132 V719 H131 V717 H130 V724 H129 V730 H128 V738 H127 V732 H126 V729 H125 V721 H124 V714 H123 V722 H122 V736 H121 V745 H120 V747 H119 V739 H118 V731 H117 V724 H116 V726 H115 V722 H114 V729 H113 V728 H112 V728 H111 V734 H110 V739 H109 V741 H108 V738 H107 V729 H106 V725 H105 V720 H104 V726 H103 V727 H102 V730 H101 V730 H100 V735 H99 V734 H98 V731 H97 V726 H96 V720 H95 V722 H94 V729 H93 V731 H92 V732 H91 V732 H90 V728 H89 V732 H88 V744 H87 V733 H86 V738 H85 V726 H84 V730 H83 V726 H82 V723 H81 V724 H80 V725 H79 V722 H78 V721 H77 V726 H76 V732 H75 V730 H74 V734 H73 V730 H72 V725 H71 V726 H70 V736 H69 V735 H68 V744 H67 V729 H66 V719 H65 V724 H64 V720 H63 V720 H62 V723 H61 V729 H60 V734 H59 V737 H58 V738 H57 V728 H56 V722 H55 V729 H54 V738 H53 V740 H52 V741 H51 V745 H50 V736 H49 V738 H48 V730 H47 V717 H46 V724 H45 V731 H44 V738 H43 V744 H42 V728 H41 V729 H40 V717 H39 V718 H38 V719 H37 V729 H36 V739 H35 V734 H34 V730 H33 V733 H32 V717 H31 V715 H30 V718 H29 V724 H28 V729 H27 V730 H26 V733 H25 V738 H24 V739 H23 V735 H22 V733 H21 V729 H20 V731 H19 V731 H18 V730 H17 Z" fill="#0f0"/>
<path d="M263 716 H263 V716 H264 H264 V708 H265 H265 V700 H266 H266 V699 H267 H267 V704 H268 H268 V716 H269 H269 V717 H270 H270 V717 H271 H271 V711 H272 H272 V714 H273 H273 V713 H274 H274 V715 H275 H275 V720 H276 H276 V715 H277 H277 V719 H278 H278 V706 H279 H279 V712 H280 H280 V713 H281 H281 V717 H282 H282 V717 H283 H283 V713 H284 H284 V714 H285 H285 V714 H286 H286 V715 H287 H287 V718 H288 H288 V719 H289 H289 V714 H290 H290 V710 H291 H291 V708 H292 H292 V710 H293 H293 V708 H294 H294 V711 H295 H295 V717 H296 H296 V717 H297 H297 V716 H298 H298 V716 H299 H299 V713 H300 H300 V701 H301 H301 V701 H302 H302 V700 H303 H303 V699 H304 H304 V711 H305 H305 V712 H306 H306 V700 H307 H307 V707 H308 H308 V705 H309 H309 V712 H310 H310 V716 H311 H311 V716 H312 H312 V724 H313 H313 V723 H314 H314 V727 H315 H315 V720 H316 H316 V716 H317 H317 V715 H318 H318 V722 H319 H319 V728 H320 H320 V725 H321 H321 V717 H322 H322 V711 H323 H323 V707 H324 H324 V704 H325 H325 V713 H326 H326 V721 H327 H327 V720 H328 H328 V712 H329 H329 V707 H330 H330 V703 H331 H331 V703 H332 H332 V703 H333 H333 V701 H334 H334 V711 H335 H335 V708 H336 H336 V717 H337 H337 V709 H338 H338 V706 H339 H339 V708 H340 H340 V713 H341 H341 V713 H342 H342 V710 H343 H343 V715 H344 H344 V707 H345 H345 V720 H346 H346 V721 H347 H347 V723 H348 H348 V720 H349 H349 V716 H350 H350 V713 H351 H351 V716 H352 H352 V727 H353 H353 V729 H354 H354 V728 H355 H355 V725 H356 H356 V718 H357 H357 V710 H358 H358 V706 H359 H359 V708 H360 H360 V701 H361 H361 V709 H362 H362 V707 H363 H363 V707 H364 H364 V714 H365 H365 V715 H366 H366 V710 H367 H367 V709 H368 H368 V722 H369 H369 V721 H370 H370 V725 H371 H371 V725 H372 H372 V724 H373 H373 V716 H374 H374 V725 H375 H375 V720 H376 H376 V719 H377 H377 V721 H378 H378 V718 H379 H379 V720 H380 H380 V722 H381 H381 V724 H382 H382 V719 H383 H383 V707 H384 H384 V705 H385 H385 V708 H386 H386 V710 H387 H387 V711 H388 H388 V707 H389 H389 V711 H390 H390 V710 H391 H391 V718 H392 H392 V721 H393 H393 V720 H394 H394 V717 H395 H395 V710 H396 H396 V705 H397 H397 V711 H398 H398 V715 H399 H399 V713 H400 H400 V721 H401 H401 V717 H402 H402 V716 H403 H403 V712 H404 H404 V711 H405 H405 V711 H406 H406 V716 H407 H407 V716 H408 H408 V712 H409 H409 V721 H410 H410 V723 H411 H411 V716 H412 H412 V716 H413 H413 V703 H414 H414 V720 H415 H415 V719 H416 H416 V706 H417 H417 V715 H418 H418 V715 H419 H419 V718 H420 H420 V716 H421 H421 V710 H422 H422 V706 H423 H423 V705 H424 H424 V714 H425 H425 V714 H426 H426 V718 H427 H427 V725 H428 H428 V717 H429 H429 V712 H430 H430 V705 H431 H431 V703 H432 H432 V708 H433 H433 V715 H434 H434 V718 H435 H435 V712 H436 H436 V715 H437 H437 V720 H438 H438 V724 H439 H439 V713 H440 H440 V714 H441 H441 V707 H442 H442 V713 H443 H443 V717 H444 H444 V724 H445 H445 V723 H446 H446 V716 H447 H447 V712 H448 H448 V713 H449 H449 V716 H450 H450 V719 H451 H451 V719 H452 H452 V719 H453 H453 V715 H454 H454 V712 H455 H455 V720 H456 H456 V721 H457 H457 V716 H458 H458 V708 H459 H459 V709 H460 H460 V713 H461 H461 V718 H462 H462 V720 H463 H463 V710 H464 H464 V709 H465 H465 V712 H466 H466 V717 H467 H467 V721 H468 H468 V719 H469 H469 V710 H470 H470 V704 H471 H471 V706 H472 H472 V706 H473 H473 V714 H474 H474 V719 H475 H475 V722 H476 H476 V726 H477 H477 V730 H478 H478 V729 H479 H479 V722 H480 H480 V713 H481 H481 V709 H482 H482 V706 H483 H483 V719 H484 H484 V719 H485 H485 V722 H486 H486 V716 H487 H487 V708 H488 H488 V702 H489 H489 V708 H490 H490 V709 H491 H491 V712 H492 H492 V711 H493 H493 V708 H494 H494 V703 H495 H495 V704 H496 H496 V705 H497 H497 V714 H498 H498 V715 H499 H499 V720 H500 H500 V719 H501 H501 V717 H502 H502 V714 H503 H503 V714 H504 H504 V717 H505 H505 V720 H506 H506 V722 H507 H507 V724 H508 H508 V715 H509 H509 V712 H510 H510 V703 H511 H511 V707 H512 H512 V718 H513 H513 V724 H514 H514 V725 H515 H515 V717 H516 H516 V720 H517 H517 V714 H518 H518 V711 H519 H519 V715 H520 H520 V723 H521 H521 V727 H522 H522 V724 H523 H523 V714 H524 H524 V705 H525 H525 V711 H526 H526 V717 H527 H527 V719 H528 H528 V713 H529 H529 V717 H530 H530 V720 H531 H531 V721 H532 H532 V723 H533 H533 V722 H534 H534 V710 H535 H535 V711 H536 H536 V712 H537 H537 V704 H538 H538 V709 H539 H539 V707 H540 H540 V701 H541 H541 V714 H542 H542 V709 H543 H543 V703 H544 H544 V704 H545 H545 V698 H546 H546 V701 H547 H547 V704 H548 H548 V709 H549 H549 V709 H550 H550 V717 H551 H551 V721 H552 H552 V720 H553 H553 V717 H554 H554 V718 H555 H555 V722 H556 H556 V726 H557 H557 V720 H558 H558 V716 H559 H559 V716 H560 H560 V716 H561 H561 V715 H562 H562 V712 H563 H563 V716 H564 H564 V708 H565 H565 V704 H566 H566 V707 H567 H567 V707 H568 H568 V712 H569 H569 V716 H570 H570 V722 H571 H571 V723 H572 H572 V718 H573 H573 V717 H574 H574 V719 H575 H575 V723 H576 H576 V714 H577 H577 V725 H578 H578 V725 H579 H579 V724 H580 H580 V720 H581 H581 V715 H582 H582 V722 H583 H583 V725 H584 H584 V725 H585 H585 V725 H586 H586 V722 H587 H587 V715 H588 H588 V708 H589 H589 V709 H590 H590 V715 H591 H591 V717 H592 H592 V723 H593 H593 V720 H594 H594 V717 H595 H595 V708 H596 H596 V706 H597 H597 V707 H598 H598 V713 H599 H599 V720 H600 H600 V720 H601 H601 V711 H602 H602 V706 H603 H603 V702 H604 H604 V706 H605 H605 V716 H606 H606 V731 H607 H607 V733 H608 H608 V721 H609 H609 V709 H610 H610 V704 H611 H611 V708 H612 H612 V712 H613 H613 V728 H614 H614 V724 H615 H615 V719 H616 H616 V703 H617 H617 V701 H618 H618 V702 H619 H619 V703 H620 H620 V703 H621 H621 V706 H622 H622 V707 H623 H623 V707 H624 H624 V709 H625 H625 V710 H626 H626 V711 H627 H627 V703 H628 H628 V697 H629 H629 V697 H630 H630 V705 H631 H631 V718 H632 H632 V730 H633 H633 V736 H634 H634 V725 H635 H635 V718 H636 H636 V704 H637 H637 V704 H638 H638 V711 H639 H639 V715 H640 H640 V717 H641 H641 V709 H642 H642 V709 H643 H643 V707 H644 H644 V713 H645 H645 V700 H646 H646 V708 H647 H647 V709 H648 H648 V705 H649 H649 V707 H650 H650 V713 H651 H651 V715 H652 H652 V715 H653 H653 V712 H654 H654 V710 H655 H655 V713 H656 H656 V721 H657 H657 V726 H658 H658 V723 H659 H659 V718 H660 H660 V721 H661 H661 V710 H662 H662 V711 H663 H663 V707 H664 H664 V715 H665 H665 V710 H666 H666 V720 H667 H667 V714 H668 H668 V709 H669 H669 V706 H670 H670 V704 H671 H671 V714 H672 H672 V717 H673 H673 V719 H674 H674 V711 H675 H675 V709 H676 H676 V708 H677 H677 V713 H678 H678 V717 H679 H679 V725 H680 H680 V717 H681 H681 V711 H682 H682 V704 H683 H683 V705 H684 H684 V711 H685 H685 V716 H686 H686 V721 H687 H687 V722 H688 H688 V721 H689 H689 V717 H690 H690 V717 H691 H691 V721 H692 H692 V718 H693 H693 V720 H694 H694 V718 H695 H695 V717 H696 H696 V717 H697 H697 V704 H698 H698 V707 H699 H699 V717 H700 H700 V718 H701 H701 V718 H702 H702 V713 H703 H703 V714 H704 H704 V715 H705 H705 V721 H706 H706 V720 H707 H707 V719 H708 H708 V718 H709 H709 V719 H710 H710 V716 H711 H711 V718 H712 H712 V717 H713 H713 V719 H714 H714 V717 H715 H715 V716 H716 H716 V716 H717 H717 V716 H718 H718 V713 H719 H719 V715 H720 H720 V716 H721 H721 V718 H722 H722 V722 H723 H723 V715 H724 H724 V713 H725 H725 V713 H726 H726 V713 H727 H727 V715 H728 H728 V700 H729 H729 V705 H730 H730 V710 H731 H731 V714 H732 H732 V719 H733 H733 V720 H734 H734 V715 H735 H735 V714 H736 H736 V711 H737 H737 V713 H738 H738 V714 H739 H739 V719 H740 H740 V721 H741 H741 V728 H742 H742 V724 H743 H743 V713 H744 H744 V711 H745 H745 V714 H746 H746 V723 H747 H747 V727 H748 H748 V726 H749 H749 V725 H750 H750 V713 H751 H751 V713 H752 H752 V720 H753 H753 V726 H754 H754 V730 H755 H755 V729 H756 H756 V725 H757 V741 H756 V742 H755 V742 H754 V746 H753 V736 H752 V729 H751 V732 H750 V738 H749 V747 H748 V747 H747 V738 H746 V733 H745 V729 H744 V732 H743 V738 H742 V744 H741 V743 H740 V730 H739 V726 H738 V726 H737 V725 H736 V732 H735 V745 H734 V737 H733 V731 H732 V726 H731 V728 H730 V727 H729 V730 H728 V728 H727 V739 H726 V735 H725 V732 H724 V732 H723 V735 H722 V737 H721 V734 H720 V728 H719 V731 H718 V731 H717 V727 H716 V730 H715 V738 H714 V737 H713 V733 H712 V729 H711 V733 H710 V729 H709 V731 H708 V731 H707 V733 H706 V737 H705 V734 H704 V729 H703 V732 H702 V735 H701 V736 H700 V731 H699 V731 H698 V740 H697 V730 H696 V736 H695 V737 H694 V733 H693 V729 H692 V731 H691 V735 H690 V740 H689 V736 H688 V738 H687 V744 H686 V736 H685 V725 H684 V718 H683 V721 H682 V726 H681 V734 H680 V738 H679 V745 H678 V733 H677 V720 H676 V722 H675 V731 H674 V730 H673 V731 H672 V726 H671 V726 H670 V726 H669 V722 H668 V731 H667 V740 H666 V738 H665 V730 H664 V726 H663 V725 H662 V730 H661 V733 H660 V736 H659 V742 H658 V738 H657 V739 H656 V731 H655 V725 H654 V725 H653 V728 H652 V727 H651 V723 H650 V723 H649 V723 H648 V722 H647 V725 H646 V731 H645 V724 H644 V730 H643 V725 H642 V727 H641 V732 H640 V731 H639 V723 H638 V720 H637 V726 H636 V734 H635 V748 H634 V746 H633 V749 H632 V741 H631 V726 H630 V715 H629 V710 H628 V718 H627 V722 H626 V729 H625 V725 H624 V724 H623 V724 H622 V720 H621 V720 H620 V721 H619 V718 H618 V720 H617 V734 H616 V733 H615 V740 H614 V742 H613 V738 H612 V719 H611 V720 H610 V731 H609 V740 H608 V746 H607 V748 H606 V738 H605 V728 H604 V726 H603 V720 H602 V730 H601 V747 H600 V734 H599 V727 H598 V721 H597 V735 H596 V733 H595 V730 H594 V732 H593 V741 H592 V732 H591 V725 H590 V726 H589 V731 H588 V736 H587 V739 H586 V738 H585 V743 H584 V740 H583 V736 H582 V739 H581 V731 H580 V737 H579 V741 H578 V736 H577 V734 H576 V734 H575 V735 H574 V734 H573 V733 H572 V734 H571 V733 H570 V734 H569 V739 H568 V729 H567 V718 H566 V715 H565 V722 H564 V726 H563 V740 H562 V726 H561 V727 H560 V732 H559 V731 H558 V734 H557 V736 H556 V736 H555 V734 H554 V740 H553 V732 H552 V736 H551 V740 H550 V733 H549 V730 H548 V723 H547 V714 H546 V720 H545 V717 H544 V725 H543 V733 H542 V727 H541 V729 H540 V721 H539 V723 H538 V731 H537 V727 H536 V722 H535 V731 H534 V734 H533 V740 H532 V737 H531 V731 H530 V729 H529 V732 H528 V735 H527 V731 H526 V727 H525 V724 H524 V731 H523 V736 H522 V737 H521 V743 H520 V734 H519 V726 H518 V727 H517 V732 H516 V740 H515 V737 H514 V742 H513 V733 H512 V731 H511 V728 H510 V726 H509 V731 H508 V735 H507 V743 H506 V739 H505 V730 H504 V729 H503 V730 H502 V727 H501 V731 H500 V730 H499 V736 H498 V730 H497 V725 H496 V725 H495 V723 H494 V724 H493 V724 H492 V723 H491 V720 H490 V720 H489 V720 H488 V725 H487 V739 H486 V734 H485 V738 H484 V729 H483 V729 H482 V728 H481 V730 H480 V735 H479 V739 H478 V744 H477 V745 H476 V741 H475 V736 H474 V729 H473 V724 H472 V719 H471 V718 H470 V731 H469 V730 H468 V734 H467 V735 H466 V728 H465 V723 H464 V727 H463 V731 H462 V741 H461 V730 H460 V719 H459 V724 H458 V730 H457 V735 H456 V736 H455 V737 H454 V730 H453 V729 H452 V732 H451 V731 H450 V734 H449 V729 H448 V728 H447 V731 H446 V738 H445 V736 H444 V732 H443 V728 H442 V729 H441 V728 H440 V738 H439 V734 H438 V732 H437 V729 H436 V735 H435 V736 H434 V726 H433 V724 H432 V717 H431 V719 H430 V727 H429 V735 H428 V741 H427 V739 H426 V729 H425 V727 H424 V728 H423 V731 H422 V729 H421 V727 H420 V728 H419 V728 H418 V726 H417 V733 H416 V738 H415 V731 H414 V731 H413 V728 H412 V738 H411 V736 H410 V734 H409 V732 H408 V730 H407 V726 H406 V731 H405 V730 H404 V727 H403 V727 H402 V730 H401 V745 H400 V736 H399 V735 H398 V727 H397 V727 H396 V725 H395 V737 H394 V733 H393 V737 H392 V732 H391 V728 H390 V725 H389 V723 H388 V721 H387 V729 H386 V728 H385 V730 H384 V737 H383 V739 H382 V735 H381 V735 H380 V737 H379 V730 H378 V732 H377 V736 H376 V737 H375 V741 H374 V744 H373 V735 H372 V738 H371 V742 H370 V746 H369 V736 H368 V731 H367 V736 H366 V732 H365 V728 H364 V727 H363 V726 H362 V726 H361 V727 H360 V726 H359 V723 H358 V727 H357 V731 H356 V737 H355 V744 H354 V746 H353 V744 H352 V740 H351 V726 H350 V729 H349 V733 H348 V733 H347 V735 H346 V736 H345 V733 H344 V733 H343 V732 H342 V732 H341 V726 H340 V720 H339 V724 H338 V727 H337 V735 H336 V728 H335 V727 H334 V725 H333 V717 H332 V717 H331 V718 H330 V718 H329 V728 H328 V733 H327 V735 H326 V728 H325 V723 H324 V718 H323 V726 H322 V733 H321 V738 H320 V744 H319 V738 H318 V737 H317 V730 H316 V738 H315 V749 H314 V744 H313 V735 H312 V735 H311 V729 H310 V723 H309 V721 H308 V717 H307 V725 H306 V728 H305 V724 H304 V721 H303 V713 H302 V714 H301 V720 H300 V724 H299 V729 H298 V729 H297 V737 H296 V736 H295 V727 H294 V730 H293 V720 H292 V720 H291 V723 H290 V731 H289 V731 H288 V735 H287 V734 H286 V738 H285 V729 H284 V730 H283 V730 H282 V734 H281 V732 H280 V724 H279 V731 H278 V730 H277 V736 H276 V731 H275 V733 H274 V731 H273 V728 H272 V727 H271 V729 H270 V732 H269 V735 H268 V730 H267 V717 H266 V719 H265 V724 H264 V729 H263 Z" fill="#0ff"/>
<path d="M757 721 H757 V721 H758 H758 V714 H759 H759 V715 H760 H760 V716 H761 H761 V725 H762 H762 V726 H763 H763 V726 H764 H764 V720 H765 H765 V720 H766 H766 V714 H767 H767 V709 H768 H768 V698 H769 H769 V698 H770 H770 V700 H771 H771 V708 H772 H772 V718 H773 H773 V715 H774 H774 V715 H775 H775 V712 H776 H776 V722 H777 H777 V721 H778 H778 V725 H779 H779 V729 H780 H780 V727 H781 H781 V726 H782 H782 V723 H783 H783 V712 H784 H784 V713 H785 H785 V718 H786 H786 V715 H787 H787 V724 H788 H788 V722 H789 H789 V717 H790 H790 V709 H791 H791 V699 H792 H792 V701 H793 H793 V705 H794 H794 V710 H795 H795 V720 H796 H796 V717 H797 H797 V721 H798 H798 V720 H799 H799 V714 H800 H800 V712 H801 H801 V711 H802 H802 V712 H803 H803 V709 H804 H804 V707 H805 H805 V705 H806 H806 V708 H807 H807 V714 H808 H808 V714 H809 H809 V712 H810 H810 V715 H811 H811 V718 H812 H812 V718 H813 H813 V715 H814 H814 V715 H815 H815 V706 H816 H816 V709 H817 H817 V704 H818 H818 V711 H819 H819 V700 H820 H820 V705 H821 H821 V714 H822 H822 V718 H823 H823 V721 H824 H824 V719 H825 H825 V716 H826 H826 V710 H827 H827 V702 H828 H828 V712 H829 H829 V709 H830 H830 V716 H831 H831 V718 H832 H832 V716 H833 H833 V708 H834 H834 V708 H835 H835 V701 H836 H836 V700 H837 H837 V709 H838 H838 V713 H839 H839 V717 H840 H840 V714 H841 H841 V715 H842 H842 V722 H843 H843 V715 H844 H844 V716 H845 H845 V720 H846 H846 V723 H847 H847 V722 H848 H848 V724 H849 H849 V721 H850 H850 V721 H851 H851 V717 H852 H852 V725 H853 H853 V730 H854 H854 V719 H855 H855 V711 H856 H856 V701 H857 H857 V694 H858 H858 V703 H859 H859 V709 H860 H860 V719 H861 H861 V720 H862 H862 V708 H863 H863 V701 H864 H864 V710 H865 H865 V707 H866 H866 V720 H867 H867 V719 H868 H868 V714 H869 H869 V714 H870 H870 V718 H871 H871 V719 H872 H872 V717 H873 H873 V724 H874 H874 V723 H875 H875 V716 H876 H876 V717 H877 H877 V717 H878 H878 V716 H879 H879 V723 H880 H880 V724 H881 H881 V723 H882 H882 V721 H883 H883 V720 H884 H884 V717 H885 H885 V704 H886 H886 V705 H887 H887 V707 H888 H888 V708 H889 H889 V720 H890 H890 V722 H891 H891 V719 H892 H892 V715 H893 H893 V708 H894 H894 V709 H895 H895 V715 H896 H896 V720 H897 H897 V717 H898 H898 V718 H899 H899 V719 H900 H900 V721 H901 H901 V718 H902 H902 V714 H903 H903 V707 H904 H904 V703 H905 H905 V705 H906 H906 V704 H907 H907 V710 H908 H908 V711 H909 H909 V709 H910 H910 V703 H911 H911 V703 H912 H912 V706 H913 H913 V713 H914 H914 V720 H915 H915 V721 H916 H916 V715 H917 H917 V715 H918 H918 V711 H919 H919 V712 H920 H920 V711 H921 H921 V708 H922 H922 V716 H923 H923 V722 H924 H924 V725 H925 H925 V722 H926 H926 V716 H927 H927 V722 H928 H928 V719 H929 H929 V712 H930 H930 V717 H931 H931 V724 H932 H932 V732 H933 H933 V726 H934 H934 V716 H935 H935 V708 H936 H936 V708 H937 H937 V710 H938 H938 V710 H939 H939 V718 H940 H940 V723 H941 H941 V727 H942 H942 V731 H943 H943 V724 H944 H944 V718 H945 H945 V714 H946 H946 V719 H947 H947 V725 H948 H948 V729 H949 H949 V732 H950 H950 V721 H951 H951 V704 H952 H952 V705 H953 H953 V699 H954 H954 V705 H955 H955 V713 H956 H956 V718 H957 H957 V711 H958 H958 V709 H959 H959 V705 H960 H960 V710 H961 H961 V714 H962 H962 V714 H963 H963 V712 H964 H964 V710 H965 H965 V706 H966 H966 V709 H967 H967 V714 H968 H968 V714 H969 H969 V706 H970 H970 V715 H971 H971 V709 H972 H972 V711 H973 H973 V708 H974 H974 V711 H975 H975 V717 H976 H976 V719 H977 H977 V719 H978 H978 V720 H979 H979 V724 H980 H980 V725 H981 H981 V719 H982 H982 V712 H983 H983 V710 H984 H984 V708 H985 H985 V698 H986 H986 V705 H987 H987 V709 H988 H988 V718 H989 H989 V724 H990 H990 V725 H991 H991 V716 H992 H992 V704 H993 H993 V709 H994 H994 V711 H995 H995 V721 H996 H996 V725 H997 H997 V721 H998 H998 V711 H999 H999 V706 H1000 H1000 V708 H1001 H1001 V700 H1002 H1002 V713 H1003 H1003 V723 H1004 H1004 V727 H1005 V737 H1004 V742 H1003 V741 H1002 V730 H1001 V719 H1000 V722 H999 V730 H998 V737 H997 V747 H996 V738 H995 V732 H994 V721 H993 V724 H992 V732 H991 V738 H990 V751 H989 V732 H988 V729 H987 V728 H986 V723 H985 V720 H984 V725 H983 V735 H982 V736 H981 V737 H980 V734 H979 V735 H978 V731 H977 V731 H976 V732 H975 V734 H974 V729 H973 V722 H972 V729 H971 V730 H970 V733 H969 V732 H968 V726 H967 V724 H966 V726 H965 V720 H964 V724 H963 V731 H962 V728 H961 V720 H960 V716 H959 V721 H958 V729 H957 V730 H956 V728 H955 V722 H954 V713 H953 V718 H952 V731 H951 V739 H950 V744 H949 V750 H948 V739 H947 V732 H946 V729 H945 V733 H944 V740 H943 V743 H942 V748 H941 V750 H940 V729 H939 V728 H938 V722 H937 V722 H936 V726 H935 V742 H934 V739 H933 V744 H932 V738 H931 V732 H930 V727 H929 V730 H928 V738 H927 V738 H926 V735 H925 V738 H924 V738 H923 V730 H922 V727 H921 V725 H920 V737 H919 V731 H918 V726 H917 V732 H916 V736 H915 V734 H914 V726 H913 V722 H912 V715 H911 V717 H910 V722 H909 V723 H908 V724 H907 V727 H906 V724 H905 V718 H904 V725 H903 V728 H902 V733 H901 V733 H900 V730 H899 V731 H898 V731 H897 V732 H896 V733 H895 V723 H894 V723 H893 V727 H892 V733 H891 V736 H890 V738 H889 V730 H888 V720 H887 V723 H886 V728 H885 V729 H884 V737 H883 V733 H882 V736 H881 V743 H880 V740 H879 V733 H878 V729 H877 V730 H876 V733 H875 V736 H874 V739 H873 V736 H872 V731 H871 V730 H870 V732 H869 V730 H868 V735 H867 V733 H866 V728 H865 V722 H864 V725 H863 V726 H862 V731 H861 V740 H860 V728 H859 V716 H858 V714 H857 V722 H856 V731 H855 V741 H854 V741 H853 V736 H852 V736 H851 V738 H850 V735 H849 V735 H848 V740 H847 V739 H846 V732 H845 V728 H844 V734 H843 V740 H842 V737 H841 V734 H840 V735 H839 V727 H838 V721 H837 V720 H836 V718 H835 V723 H834 V731 H833 V733 H832 V731 H831 V729 H830 V730 H829 V727 H828 V725 H827 V727 H826 V729 H825 V736 H824 V734 H823 V737 H822 V732 H821 V725 H820 V725 H819 V724 H818 V728 H817 V724 H816 V730 H815 V736 H814 V729 H813 V734 H812 V734 H811 V730 H810 V736 H809 V733 H808 V729 H807 V730 H806 V730 H805 V726 H804 V722 H803 V722 H802 V727 H801 V731 H800 V730 H799 V731 H798 V735 H797 V743 H796 V736 H795 V732 H794 V717 H793 V714 H792 V719 H791 V724 H790 V732 H789 V740 H788 V743 H787 V738 H786 V730 H785 V729 H784 V734 H783 V734 H782 V741 H781 V744 H780 V741 H779 V744 H778 V738 H777 V733 H776 V734 H775 V730 H774 V741 H773 V735 H772 V728 H771 V723 H770 V711 H769 V721 H768 V726 H767 V736 H766 V738 H765 V745 H764 V741 H763 V739 H762 V738 H761 V740 H760 V725 H759 V730 H758 V734 H757 Z" fill="#0f0"/>
<rect x="1130.5" y="88.5" width="512" height="340" fill="none" stroke="#fff" stroke-width="1"/>
<rect x="1120" y="173" width="10" height="1" fill="#fff"/>
<rect x="1120" y="258" width="10" height="1" fill="#fff"/>
<rect x="1120" y="343" width="10" height="1" fill="#fff"/>
<rect x="1258" y="429" width="1" height="10" fill="#fff"/>
<rect x="1386" y="429" width="1" height="10" fill="#fff"/>
<rect x="1514" y="429" width="1" height="10" fill="#fff"/>
<rect x="1130.5" y="553.5" width="512" height="340" fill="none" stroke="#fff" stroke-width="1"/>
<rect x="1120" y="638" width="10" height="1" fill="#fff"/>
<rect x="1120" y="723" width="10" height="1" fill="#fff"/>
<rect x="1120" y="808" width="10" height="1" fill="#fff"/>
<rect x="1258" y="894" width="1" height="10" fill="#fff"/>
<rect x="1386" y="894" width="1" height="10" fill="#fff"/>
<rect x="1514" y="894" width="1" height="10" fill="#fff"/>
<clipPath id="cs1"><rect x="1129" y="86" width="514" height="343"/></clipPath><clipPath id="cs2"><rect x="1129" y="551" width="514" height="343"/></clipPath>
<path d="M1130.8 259.0 C1133.6 261.5 1143.9 271.4 1147.5 274.0 C1151.1 276.6 1150.9 274.5 1152.5 274.5 C1154.1 274.5 1154.6 275.6 1157.0 274.0 C1159.4 272.4 1164.5 267.5 1166.9 265.0 C1169.3 262.5 1170.2 260.0 1171.6 259.0 C1173.0 258.0 1174.0 258.5 1175.3 258.8 C1176.5 259.1 1176.6 257.9 1179.1 260.9 C1181.6 263.9 1187.6 273.6 1190.3 277.0 C1193.0 280.4 1193.6 280.2 1195.0 281.0 C1196.4 281.8 1197.3 281.5 1198.5 281.5 C1199.7 281.5 1200.2 282.6 1202.0 281.0 C1203.8 279.4 1206.1 276.0 1209.1 272.2 C1212.0 268.4 1216.5 258.6 1219.7 258.1 C1222.9 257.6 1225.4 263.4 1228.3 269.3 C1231.2 275.2 1233.5 287.0 1236.9 293.4 C1240.3 299.8 1245.8 305.4 1248.9 307.5 C1252.1 309.6 1253.2 308.7 1255.8 306.3 C1258.4 303.9 1261.5 300.1 1264.4 293.4 C1267.3 286.6 1270.6 272.1 1273.0 265.8 C1275.4 259.5 1276.7 255.5 1278.7 255.5 C1280.7 255.5 1282.6 258.9 1285.1 265.8 C1287.6 272.7 1290.3 287.1 1293.7 296.8 C1297.1 306.6 1301.4 315.4 1305.7 324.3 C1310.0 333.2 1315.2 342.4 1319.5 350.2 C1323.8 357.9 1327.2 364.9 1331.5 370.8 C1335.8 376.7 1341.3 382.4 1345.3 385.4 C1349.3 388.4 1352.1 388.9 1355.6 388.9 C1359.0 388.9 1362.5 387.8 1366.0 385.4 C1369.5 383.0 1373.1 379.0 1376.3 374.3 C1379.5 369.6 1382.5 362.0 1385.0 357.0 C1387.5 352.0 1388.2 352.9 1391.0 344.4 C1393.8 335.9 1399.0 318.6 1402.0 305.8 C1405.0 293.0 1406.8 282.0 1408.9 267.3 C1411.0 252.6 1412.8 235.1 1414.4 217.7 C1416.0 200.2 1417.2 179.1 1418.6 162.6 C1420.0 146.1 1421.5 122.3 1422.7 118.6 C1423.9 114.9 1424.9 136.3 1426.0 140.5 C1427.1 144.7 1428.2 143.8 1429.3 143.8 C1430.4 143.8 1431.8 143.3 1432.8 140.5 C1433.8 137.7 1433.9 135.3 1435.1 126.8 C1436.3 118.3 1438.2 89.1 1440.0 89.6 C1441.8 90.1 1444.3 116.9 1446.1 129.6 C1447.9 142.3 1449.3 159.2 1451.0 166.0 C1452.7 172.8 1454.5 170.2 1456.3 170.2 C1458.0 170.2 1459.5 170.6 1461.5 166.0 C1463.5 161.4 1465.6 141.5 1468.1 142.8 C1470.6 144.1 1473.8 163.5 1476.4 173.6 C1479.1 183.7 1482.0 197.9 1484.0 203.5 C1486.0 209.1 1486.9 207.0 1488.3 207.0 C1489.7 207.0 1490.6 207.0 1492.5 203.5 C1494.4 200.0 1497.4 182.7 1499.8 186.0 C1502.2 189.3 1504.0 207.7 1506.7 223.2 C1509.4 238.7 1512.1 262.5 1515.8 279.0 C1519.5 295.5 1524.5 312.1 1528.8 322.4 C1533.1 332.7 1537.8 337.7 1541.8 340.8 C1545.8 343.9 1548.0 342.0 1552.7 340.8 C1557.4 339.6 1565.7 334.6 1570.0 333.7 C1574.3 332.8 1574.4 332.0 1578.7 335.4 C1583.0 338.8 1591.0 346.3 1596.0 353.9 C1601.0 361.5 1605.4 372.8 1609.0 381.0 C1612.6 389.2 1614.4 395.2 1617.5 403.0 C1620.6 410.8 1625.8 423.8 1627.5 428.0 L1642 428" fill="none" stroke="#0ff" stroke-width="2.0" clip-path="url(#cs1)"/>
<path d="M1131.0 553.6 C1131.7 555.0 1133.4 556.5 1135.3 562.2 C1137.2 567.9 1139.6 580.5 1142.2 588.0 C1144.8 595.5 1147.7 602.1 1150.8 607.0 C1153.9 611.9 1156.8 614.1 1161.1 617.3 C1165.4 620.4 1172.0 623.5 1176.6 625.9 C1181.2 628.3 1185.2 630.9 1188.7 631.9 C1192.2 632.9 1194.4 633.2 1197.3 631.9 C1200.2 630.6 1202.5 627.2 1205.9 624.2 C1209.3 621.2 1214.5 614.4 1217.9 613.8 C1221.3 613.2 1223.9 617.0 1226.5 620.7 C1229.1 624.4 1230.2 630.8 1233.4 636.2 C1236.6 641.7 1242.6 650.1 1245.5 653.4 C1248.4 656.7 1248.0 655.6 1250.6 656.0 C1253.2 656.4 1257.8 656.3 1261.0 656.0 C1264.2 655.7 1266.4 653.0 1269.6 654.3 C1272.8 655.6 1276.5 659.1 1279.9 663.8 C1283.3 668.5 1286.8 676.7 1290.2 682.7 C1293.7 688.7 1296.6 694.6 1300.6 699.9 C1304.6 705.2 1309.7 711.0 1314.3 714.5 C1318.9 718.0 1324.1 719.7 1328.1 720.6 C1332.1 721.5 1335.0 721.0 1338.4 719.7 C1341.9 718.4 1344.2 715.9 1348.8 712.8 C1353.4 709.6 1362.0 702.5 1366.0 700.8 C1370.0 699.1 1369.6 700.4 1372.8 702.5 C1376.0 704.6 1381.8 711.1 1385.0 713.6 C1388.2 716.1 1389.4 717.1 1392.0 717.8 C1394.6 718.4 1397.5 718.9 1400.5 717.5 C1403.5 716.1 1407.2 713.1 1410.3 709.4 C1413.3 705.7 1416.2 698.7 1418.8 695.3 C1421.4 691.9 1423.5 688.9 1425.8 689.0 C1428.1 689.1 1430.2 691.7 1432.8 696.0 C1435.4 700.3 1438.7 709.7 1441.3 715.0 C1443.9 720.3 1445.5 724.1 1448.3 727.7 C1451.1 731.3 1455.3 735.2 1458.1 736.8 C1460.9 738.4 1462.2 738.0 1465.2 737.5 C1468.2 737.0 1472.7 735.1 1476.4 734.0 C1480.2 732.9 1484.4 730.8 1487.7 730.8 C1491.0 730.8 1492.1 731.1 1496.1 734.0 C1500.1 736.9 1507.1 744.8 1511.6 748.0 C1516.0 751.2 1518.1 752.2 1522.8 753.3 C1527.5 754.4 1534.5 753.9 1539.7 754.8 C1544.9 755.7 1549.1 757.0 1553.8 758.6 C1558.5 760.2 1562.6 762.3 1567.8 764.2 C1573.0 766.1 1580.0 767.7 1584.7 769.8 C1589.4 771.9 1591.2 772.8 1595.9 776.9 C1600.6 781.0 1608.1 789.8 1612.8 794.5 C1617.5 799.2 1620.8 802.3 1624.1 805.0 C1627.4 807.7 1629.6 809.7 1632.5 810.6 C1635.4 811.5 1640.1 810.6 1641.6 810.6" fill="none" stroke="#0ff" stroke-width="2.0" clip-path="url(#cs2)"/>
<rect x="1711.5" y="29.5" width="123" height="32" fill="#e1e1e1" stroke="#adadad" stroke-width="1"/>
<rect x="1847.5" y="29.5" width="67" height="32" fill="#e1e1e1" stroke="#adadad" stroke-width="1"/>
<rect x="1710" y="70" width="206" height="25" fill="#ff8080"/>
<rect x="1710.5" y="101.5" width="205" height="156" fill="#fff" stroke="#828790" stroke-width="1"/>
<rect x="1712" y="104" width="202" height="153" fill="#7fffd4"/>
<rect x="1712" y="104" width="202" height="19" fill="#3399ff"/>
<rect x="1710" y="265" width="205" height="24" fill="#fff"/>
<rect x="1710" y="265" width="204" height="23" fill="#a0a0a0"/>
<rect x="1711" y="266" width="203" height="22" fill="#ff8080"/>
<rect x="1711.5" y="298.5" width="123" height="34" fill="#e1e1e1" stroke="#adadad" stroke-width="1"/>
<rect x="1847.5" y="298.5" width="67" height="34" fill="#e1e1e1" stroke="#adadad" stroke-width="1"/>
<rect x="1711.5" y="343.5" width="123" height="32" fill="#e1e1e1" stroke="#adadad" stroke-width="1"/>
<rect x="1847.5" y="343.5" width="67" height="32" fill="#e1e1e1" stroke="#adadad" stroke-width="1"/>
<rect x="1711.5" y="385.5" width="203" height="32" fill="#e1e1e1" stroke="#adadad" stroke-width="1"/>
<rect x="1711.5" y="428.5" width="36" height="25" fill="#ffa500" stroke="#4a3000" stroke-width="1"/>
<rect x="1764.5" y="427.5" width="150" height="27" fill="#cccccc" stroke="#bfbfbf" stroke-width="1"/>
<rect x="1710" y="463" width="205" height="24" fill="#fff"/>
<rect x="1710" y="463" width="204" height="23" fill="#a0a0a0"/>
<rect x="1711" y="464" width="203" height="22" fill="#ff8080"/>
<rect x="1709.5" y="492.5" width="49" height="281" fill="#000" stroke="#fff" stroke-width="1"/>
<rect x="1720" y="582" width="29" height="132" fill="#f00"/>
<rect x="1720" y="714" width="29" height="12" fill="#ff0"/>
<rect x="1720" y="726" width="29" height="47" fill="#0f0"/>
<rect x="1748" y="503" width="10" height="1" fill="#fff"/>
<rect x="1710" y="713" width="10" height="1" fill="#fff"/>
<rect x="1711.5" y="808.5" width="123" height="32" fill="#e1e1e1" stroke="#adadad" stroke-width="1"/>
<rect x="1847.5" y="808.5" width="67" height="32" fill="#e1e1e1" stroke="#adadad" stroke-width="1"/>
<rect x="1711.5" y="850.5" width="203" height="32" fill="#e1e1e1" stroke="#adadad" stroke-width="1"/>
<rect x="6.5" y="979.5" width="207" height="33" fill="#e1e1e1" stroke="#adadad" stroke-width="1"/>
<rect x="6.5" y="1027.5" width="207" height="33" fill="#e1e1e1" stroke="#adadad" stroke-width="1"/>
<rect x="6.5" y="1075.5" width="207" height="33" fill="#e1e1e1" stroke="#adadad" stroke-width="1"/>
<rect x="6.5" y="1123.5" width="207" height="33" fill="#e1e1e1" stroke="#adadad" stroke-width="1"/>
<rect x="220" y="957" width="1044" height="24" fill="#fff"/>
<rect x="319" y="957" width="1" height="24" fill="#e0e0e0"/>
<rect x="619" y="957" width="1" height="24" fill="#e0e0e0"/>
<rect x="819" y="957" width="1" height="24" fill="#e0e0e0"/>
<rect x="1069" y="957" width="1" height="24" fill="#e0e0e0"/>
<rect x="1169" y="957" width="1" height="24" fill="#e0e0e0"/>
<rect x="220" y="981" width="1043" height="178" fill="#7fffd4"/>
<rect x="220" y="1096" width="950" height="23" fill="#f0f0f0"/>
<rect x="1264" y="957" width="15" height="202" fill="#f0f0f0"/>
<rect x="1264" y="974" width="15" height="34" fill="#cdcdcd"/>
<path d="M1268 969 L1271.5 965.5 L1275 969" fill="none" stroke="#606060" stroke-width="1.5"/>
<path d="M1268 1148 L1271.5 1151.5 L1275 1148" fill="none" stroke="#606060" stroke-width="1.5"/>
<rect x="1426" y="1015" width="139" height="24" fill="#fff"/>
<rect x="1426" y="1015" width="138" height="23" fill="#a0a0a0"/>
<rect x="1427" y="1016" width="137" height="22" fill="#ff8080"/>
<rect x="1426" y="1050" width="139" height="24" fill="#fff"/>
<rect x="1426" y="1050" width="138" height="23" fill="#a0a0a0"/>
<rect x="1427" y="1051" width="137" height="22" fill="#ff8080"/>
<rect x="1426" y="1085" width="139" height="24" fill="#fff"/>
<rect x="1426" y="1085" width="138" height="23" fill="#a0a0a0"/>
<rect x="1427" y="1086" width="137" height="22" fill="#ff8080"/>
<rect x="1426" y="1120" width="139" height="24" fill="#fff"/>
<rect x="1426" y="1120" width="138" height="23" fill="#a0a0a0"/>
<rect x="1427" y="1121" width="137" height="22" fill="#ff8080"/>
<rect x="1639" y="1085" width="277" height="25" fill="#ff8080"/>
<rect x="1640.5" y="1124.5" width="188" height="32" fill="#f0f0f0" stroke="#adadad" stroke-width="1"/>
<rect x="1643" y="1127" width="183" height="27" fill="#ffa500"/>
<rect x="1851.5" y="1124.5" width="63" height="32" fill="#e1e1e1" stroke="#adadad" stroke-width="1"/>
<text x="22.78" y="16.00" font-family="Liberation Sans" font-weight="normal" font-size="12.5" fill="#000" textLength="85.27" lengthAdjust="spacingAndGlyphs" xml:space="preserve">Recognition 1-d</text>
<text x="128.19" y="16.00" font-family="Liberation Sans" font-weight="normal" font-size="12.5" fill="#000" textLength="70.76" lengthAdjust="spacingAndGlyphs" xml:space="preserve">( Version 2.0 )</text>
<text x="240.72" y="16.00" font-family="Liberation Sans" font-weight="normal" font-size="12.5" fill="#000" textLength="201.54" lengthAdjust="spacingAndGlyphs" xml:space="preserve">[ C:¥SoundID_64_SetValues_Folder_01 ]</text>
<text x="17.16" y="50.70" font-family="Liberation Sans" font-weight="bold" font-size="22.3" fill="#fff" textLength="115.11" lengthAdjust="spacingAndGlyphs" xml:space="preserve">KKandST011</text>
<text x="508.64" y="53.50" font-family="Liberation Sans" font-weight="bold" font-size="22.5" fill="#0ff" textLength="150.86" lengthAdjust="spacingAndGlyphs" xml:space="preserve">6001 points LPC</text>
<text x="828.70" y="53.50" font-family="Liberation Sans" font-weight="bold" font-size="22.5" fill="#0f0" textLength="182.38" lengthAdjust="spacingAndGlyphs" xml:space="preserve">473418 points wave</text>
<text x="1036.76" y="50.70" font-family="Liberation Sans" font-weight="bold" font-size="22.3" fill="#fff" textLength="115.11" lengthAdjust="spacingAndGlyphs" xml:space="preserve">KKandST011</text>
<text x="1517.61" y="51.00" font-family="Liberation Serif" font-weight="bold" font-size="23" fill="#fff" textLength="146.68" lengthAdjust="spacingAndGlyphs" xml:space="preserve">Input Pattern</text>
<text x="17.15" y="515.70" font-family="Liberation Sans" font-weight="bold" font-size="22.3" fill="#fff" textLength="48.41" lengthAdjust="spacingAndGlyphs" xml:space="preserve">KK06</text>
<text x="508.64" y="518.50" font-family="Liberation Sans" font-weight="bold" font-size="22.5" fill="#0ff" textLength="150.86" lengthAdjust="spacingAndGlyphs" xml:space="preserve">6001 points LPC</text>
<text x="838.53" y="518.50" font-family="Liberation Sans" font-weight="bold" font-size="22.5" fill="#0f0" textLength="172.10" lengthAdjust="spacingAndGlyphs" xml:space="preserve">96450 points wave</text>
<text x="1036.75" y="515.70" font-family="Liberation Sans" font-weight="bold" font-size="22.3" fill="#fff" textLength="48.41" lengthAdjust="spacingAndGlyphs" xml:space="preserve">KK06</text>
<text x="1474.20" y="516.00" font-family="Liberation Serif" font-weight="bold" font-size="23" fill="#fff" textLength="189.06" lengthAdjust="spacingAndGlyphs" xml:space="preserve">Standard Pattern</text>
<text x="9.35" y="459.00" font-family="Liberation Sans" font-weight="bold" font-size="19.5" fill="#fff" textLength="68.84" lengthAdjust="spacingAndGlyphs" xml:space="preserve">5.103sec</text>
<text x="9.35" y="480.00" font-family="Liberation Sans" font-weight="bold" font-size="19.5" fill="#fff" textLength="55.06" lengthAdjust="spacingAndGlyphs" xml:space="preserve">225039</text>
<text x="236.15" y="459.00" font-family="Liberation Sans" font-weight="bold" font-size="19.5" fill="#fff" textLength="68.84" lengthAdjust="spacingAndGlyphs" xml:space="preserve">5.171sec</text>
<text x="236.15" y="480.00" font-family="Liberation Sans" font-weight="bold" font-size="19.5" fill="#fff" textLength="55.06" lengthAdjust="spacingAndGlyphs" xml:space="preserve">228039</text>
<text x="483.15" y="459.00" font-family="Liberation Sans" font-weight="bold" font-size="19.5" fill="#fff" textLength="68.84" lengthAdjust="spacingAndGlyphs" xml:space="preserve">5.239sec</text>
<text x="483.15" y="480.00" font-family="Liberation Sans" font-weight="bold" font-size="19.5" fill="#fff" textLength="55.06" lengthAdjust="spacingAndGlyphs" xml:space="preserve">231039</text>
<text x="730.05" y="459.00" font-family="Liberation Sans" font-weight="bold" font-size="19.5" fill="#fff" textLength="68.84" lengthAdjust="spacingAndGlyphs" xml:space="preserve">5.307sec</text>
<text x="730.05" y="480.00" font-family="Liberation Sans" font-weight="bold" font-size="19.5" fill="#fff" textLength="55.06" lengthAdjust="spacingAndGlyphs" xml:space="preserve">234039</text>
<text x="937.35" y="459.00" font-family="Liberation Sans" font-weight="bold" font-size="19.5" fill="#fff" textLength="68.84" lengthAdjust="spacingAndGlyphs" xml:space="preserve">5.375sec</text>
<text x="937.35" y="480.00" font-family="Liberation Sans" font-weight="bold" font-size="19.5" fill="#fff" textLength="55.06" lengthAdjust="spacingAndGlyphs" xml:space="preserve">237039</text>
<text x="1081.54" y="94.80" font-family="Liberation Sans" font-weight="bold" font-size="19.5" fill="#fff" textLength="31.17" lengthAdjust="spacingAndGlyphs" xml:space="preserve">0dB</text>
<text x="1067.16" y="179.80" font-family="Liberation Sans" font-weight="bold" font-size="19.5" fill="#fff" textLength="45.84" lengthAdjust="spacingAndGlyphs" xml:space="preserve">-13dB</text>
<text x="1067.16" y="264.80" font-family="Liberation Sans" font-weight="bold" font-size="19.5" fill="#fff" textLength="45.84" lengthAdjust="spacingAndGlyphs" xml:space="preserve">-25dB</text>
<text x="1067.16" y="349.80" font-family="Liberation Sans" font-weight="bold" font-size="19.5" fill="#fff" textLength="45.84" lengthAdjust="spacingAndGlyphs" xml:space="preserve">-38dB</text>
<text x="1067.16" y="429.90" font-family="Liberation Sans" font-weight="bold" font-size="19.5" fill="#fff" textLength="45.84" lengthAdjust="spacingAndGlyphs" xml:space="preserve">-50dB</text>
<text x="1230.24" y="458.00" font-family="Liberation Sans" font-weight="bold" font-size="19.5" fill="#fff" textLength="56.87" lengthAdjust="spacingAndGlyphs" xml:space="preserve">2000Hz</text>
<text x="1358.66" y="458.00" font-family="Liberation Sans" font-weight="bold" font-size="19.5" fill="#fff" textLength="56.87" lengthAdjust="spacingAndGlyphs" xml:space="preserve">4000Hz</text>
<text x="1486.24" y="458.00" font-family="Liberation Sans" font-weight="bold" font-size="19.5" fill="#fff" textLength="56.87" lengthAdjust="spacingAndGlyphs" xml:space="preserve">6000Hz</text>
<text x="1614.24" y="458.00" font-family="Liberation Sans" font-weight="bold" font-size="19.5" fill="#fff" textLength="56.87" lengthAdjust="spacingAndGlyphs" xml:space="preserve">8000Hz</text>
<text x="1125.05" y="458.00" font-family="Liberation Sans" font-weight="bold" font-size="19.5" fill="#fff" textLength="29.35" lengthAdjust="spacingAndGlyphs" xml:space="preserve">0Hz</text>
<text x="9.35" y="924.00" font-family="Liberation Sans" font-weight="bold" font-size="19.5" fill="#fff" textLength="68.84" lengthAdjust="spacingAndGlyphs" xml:space="preserve">1.760sec</text>
<text x="9.35" y="945.00" font-family="Liberation Sans" font-weight="bold" font-size="19.5" fill="#fff" textLength="45.88" lengthAdjust="spacingAndGlyphs" xml:space="preserve">77615</text>
<text x="236.15" y="924.00" font-family="Liberation Sans" font-weight="bold" font-size="19.5" fill="#fff" textLength="68.84" lengthAdjust="spacingAndGlyphs" xml:space="preserve">1.828sec</text>
<text x="236.15" y="945.00" font-family="Liberation Sans" font-weight="bold" font-size="19.5" fill="#fff" textLength="45.88" lengthAdjust="spacingAndGlyphs" xml:space="preserve">80615</text>
<text x="483.15" y="924.00" font-family="Liberation Sans" font-weight="bold" font-size="19.5" fill="#fff" textLength="68.84" lengthAdjust="spacingAndGlyphs" xml:space="preserve">1.896sec</text>
<text x="483.15" y="945.00" font-family="Liberation Sans" font-weight="bold" font-size="19.5" fill="#fff" textLength="45.88" lengthAdjust="spacingAndGlyphs" xml:space="preserve">83615</text>
<text x="730.05" y="924.00" font-family="Liberation Sans" font-weight="bold" font-size="19.5" fill="#fff" textLength="68.84" lengthAdjust="spacingAndGlyphs" xml:space="preserve">1.964sec</text>
<text x="730.05" y="945.00" font-family="Liberation Sans" font-weight="bold" font-size="19.5" fill="#fff" textLength="45.88" lengthAdjust="spacingAndGlyphs" xml:space="preserve">86615</text>
<text x="937.35" y="924.00" font-family="Liberation Sans" font-weight="bold" font-size="19.5" fill="#fff" textLength="68.84" lengthAdjust="spacingAndGlyphs" xml:space="preserve">2.032sec</text>
<text x="937.35" y="945.00" font-family="Liberation Sans" font-weight="bold" font-size="19.5" fill="#fff" textLength="45.88" lengthAdjust="spacingAndGlyphs" xml:space="preserve">89615</text>
<text x="1081.54" y="559.80" font-family="Liberation Sans" font-weight="bold" font-size="19.5" fill="#fff" textLength="31.17" lengthAdjust="spacingAndGlyphs" xml:space="preserve">0dB</text>
<text x="1067.16" y="644.80" font-family="Liberation Sans" font-weight="bold" font-size="19.5" fill="#fff" textLength="45.84" lengthAdjust="spacingAndGlyphs" xml:space="preserve">-13dB</text>
<text x="1067.16" y="729.80" font-family="Liberation Sans" font-weight="bold" font-size="19.5" fill="#fff" textLength="45.84" lengthAdjust="spacingAndGlyphs" xml:space="preserve">-25dB</text>
<text x="1067.16" y="814.80" font-family="Liberation Sans" font-weight="bold" font-size="19.5" fill="#fff" textLength="45.84" lengthAdjust="spacingAndGlyphs" xml:space="preserve">-38dB</text>
<text x="1067.16" y="894.90" font-family="Liberation Sans" font-weight="bold" font-size="19.5" fill="#fff" textLength="45.84" lengthAdjust="spacingAndGlyphs" xml:space="preserve">-50dB</text>
<text x="1230.24" y="923.00" font-family="Liberation Sans" font-weight="bold" font-size="19.5" fill="#fff" textLength="56.87" lengthAdjust="spacingAndGlyphs" xml:space="preserve">2000Hz</text>
<text x="1358.66" y="923.00" font-family="Liberation Sans" font-weight="bold" font-size="19.5" fill="#fff" textLength="56.87" lengthAdjust="spacingAndGlyphs" xml:space="preserve">4000Hz</text>
<text x="1486.24" y="923.00" font-family="Liberation Sans" font-weight="bold" font-size="19.5" fill="#fff" textLength="56.87" lengthAdjust="spacingAndGlyphs" xml:space="preserve">6000Hz</text>
<text x="1614.24" y="923.00" font-family="Liberation Sans" font-weight="bold" font-size="19.5" fill="#fff" textLength="56.87" lengthAdjust="spacingAndGlyphs" xml:space="preserve">8000Hz</text>
<text x="1125.05" y="923.00" font-family="Liberation Sans" font-weight="bold" font-size="19.5" fill="#fff" textLength="29.35" lengthAdjust="spacingAndGlyphs" xml:space="preserve">0Hz</text>
<text x="1269.07" y="480.00" font-family="Liberation Sans" font-weight="bold" font-size="21" fill="#0ff" textLength="222.20" lengthAdjust="spacingAndGlyphs" xml:space="preserve">Peak Frequency 4844Hz</text>
<text x="1268.47" y="945.00" font-family="Liberation Sans" font-weight="bold" font-size="21" fill="#0ff" textLength="190.08" lengthAdjust="spacingAndGlyphs" xml:space="preserve">Peak Frequency 0Hz</text>
<text x="1721.58" y="49.00" font-family="Liberation Serif" font-weight="bold" font-size="12.6" fill="#000" textLength="100.39" lengthAdjust="spacingAndGlyphs" xml:space="preserve">Wave Files inp.</text>
<text x="1863.90" y="50.90" font-family="Liberation Serif" font-weight="bold" font-size="18.5" fill="#000" textLength="33.07" lengthAdjust="spacingAndGlyphs" xml:space="preserve">Mic</text>
<text x="1744.36" y="89.80" font-family="Liberation Sans" font-weight="bold" font-size="21" fill="#000" textLength="136.92" lengthAdjust="spacingAndGlyphs" xml:space="preserve">AbnotmalSound</text>
<text x="1713.82" y="118.80" font-family="Liberation Sans" font-weight="bold" font-size="16.5" fill="#fff" textLength="98.55" lengthAdjust="spacingAndGlyphs" xml:space="preserve">KKandST011</text>
<text x="1713.81" y="137.80" font-family="Liberation Sans" font-weight="bold" font-size="16.5" fill="#000" textLength="101.07" lengthAdjust="spacingAndGlyphs" xml:space="preserve">KKandST012</text>
<text x="1713.81" y="156.80" font-family="Liberation Sans" font-weight="bold" font-size="16.5" fill="#000" textLength="101.07" lengthAdjust="spacingAndGlyphs" xml:space="preserve">KKandST013</text>
<text x="1805.60" y="285.00" font-family="Liberation Sans" font-weight="bold" font-size="20" fill="#000" textLength="10.01" lengthAdjust="spacingAndGlyphs" xml:space="preserve">1</text>
<text x="1728.20" y="320.70" font-family="Liberation Serif" font-weight="bold" font-size="15" fill="#00f" textLength="88.27" lengthAdjust="spacingAndGlyphs" xml:space="preserve">Recognition</text>
<text x="1863.30" y="320.70" font-family="Liberation Serif" font-weight="bold" font-size="15" fill="#00f" textLength="34.67" lengthAdjust="spacingAndGlyphs" xml:space="preserve">R. all</text>
<text x="1740.88" y="364.80" font-family="Liberation Serif" font-weight="bold" font-size="18.5" fill="#000" textLength="61.41" lengthAdjust="spacingAndGlyphs" xml:space="preserve">Sound</text>
<text x="1861.05" y="364.80" font-family="Liberation Serif" font-weight="bold" font-size="16.3" fill="#000" textLength="36.44" lengthAdjust="spacingAndGlyphs" xml:space="preserve">Stop</text>
<text x="1745.40" y="406.90" font-family="Liberation Serif" font-weight="bold" font-size="18.5" fill="#000" textLength="134.71" lengthAdjust="spacingAndGlyphs" xml:space="preserve">Filtered Sound</text>
<text x="1720.60" y="445.80" font-family="Liberation Serif" font-weight="bold" font-size="14.8" fill="#000" textLength="20.46" lengthAdjust="spacingAndGlyphs" xml:space="preserve">DF</text>
<text x="1798.19" y="446.60" font-family="Liberation Serif" font-weight="bold" font-size="16" fill="#a0a0a0" textLength="80.36" lengthAdjust="spacingAndGlyphs" xml:space="preserve">Delete File</text>
<text x="1732.59" y="482.70" font-family="Liberation Sans" font-weight="bold" font-size="19.5" fill="#000" textLength="161.70" lengthAdjust="spacingAndGlyphs" xml:space="preserve">Auto   16bit   44100Hz</text>
<text x="1766.25" y="505.90" font-family="Liberation Serif" font-weight="bold" font-size="14" fill="#000" textLength="81.72" lengthAdjust="spacingAndGlyphs" xml:space="preserve">9o.o degrees</text>
<text x="1766.40" y="774.80" font-family="Liberation Serif" font-weight="bold" font-size="14.5" fill="#000" textLength="21.25" lengthAdjust="spacingAndGlyphs" xml:space="preserve">o.o</text>
<text x="1721.38" y="790.90" font-family="Liberation Serif" font-weight="bold" font-size="17" fill="#000" textLength="26.03" lengthAdjust="spacingAndGlyphs" xml:space="preserve">GD</text>
<text x="1730.13" y="829.80" font-family="Liberation Serif" font-weight="bold" font-size="17" fill="#000" textLength="81.87" lengthAdjust="spacingAndGlyphs" xml:space="preserve">Sound std.</text>
<text x="1861.05" y="829.80" font-family="Liberation Serif" font-weight="bold" font-size="16.3" fill="#000" textLength="36.44" lengthAdjust="spacingAndGlyphs" xml:space="preserve">Stop</text>
<text x="1738.49" y="871.90" font-family="Liberation Serif" font-weight="bold" font-size="17.7" fill="#000" textLength="145.19" lengthAdjust="spacingAndGlyphs" xml:space="preserve">Filtered Sound std.</text>
<text x="38.95" y="999.60" font-family="Liberation Serif" font-weight="bold" font-size="13.2" fill="#000" textLength="139.19" lengthAdjust="spacingAndGlyphs" xml:space="preserve">Confirm (Sound inp.)</text>
<text x="60.16" y="1050.00" font-family="Liberation Serif" font-weight="bold" font-size="18.5" fill="#000" textLength="97.19" lengthAdjust="spacingAndGlyphs" xml:space="preserve">Save Wave</text>
<text x="54.94" y="1097.80" font-family="Liberation Serif" font-weight="bold" font-size="16.6" fill="#000" textLength="107.40" lengthAdjust="spacingAndGlyphs" xml:space="preserve">Export Excel</text>
<text x="51.80" y="1145.90" font-family="Liberation Serif" font-weight="bold" font-size="17.7" fill="#000" textLength="114.51" lengthAdjust="spacingAndGlyphs" xml:space="preserve">Append Excel</text>
<text x="325.28" y="974.00" font-family="Liberation Sans" font-weight="bold" font-size="16.5" fill="#000" textLength="98.75" lengthAdjust="spacingAndGlyphs" xml:space="preserve">Input Pattern</text>
<text x="627.10" y="974.00" font-family="Liberation Sans" font-weight="bold" font-size="16.5" fill="#000" textLength="76.51" lengthAdjust="spacingAndGlyphs" xml:space="preserve">Time (sec)</text>
<text x="825.54" y="974.00" font-family="Liberation Sans" font-weight="bold" font-size="16.5" fill="#000" textLength="226.78" lengthAdjust="spacingAndGlyphs" xml:space="preserve">Most Similar Standard Pattern</text>
<text x="1115.70" y="974.00" font-family="Liberation Sans" font-weight="bold" font-size="16.5" fill="#000" textLength="24.64" lengthAdjust="spacingAndGlyphs" xml:space="preserve">GD</text>
<text x="303.50" y="997.90" font-family="Liberation Sans" font-weight="bold" font-size="16.5" fill="#000" xml:space="preserve">1</text>
<text x="325.52" y="997.90" font-family="Liberation Sans" font-weight="bold" font-size="16.5" fill="#000" textLength="98.55" lengthAdjust="spacingAndGlyphs" xml:space="preserve">KKandST011</text>
<text x="626.25" y="997.90" font-family="Liberation Sans" font-weight="bold" font-size="16.5" fill="#000" textLength="39.43" lengthAdjust="spacingAndGlyphs" xml:space="preserve">4.559</text>
<text x="826.44" y="997.90" font-family="Liberation Sans" font-weight="bold" font-size="16.5" fill="#000" textLength="143.61" lengthAdjust="spacingAndGlyphs" xml:space="preserve">Standard 1 - (8) Far</text>
<text x="1104.20" y="997.90" font-family="Liberation Sans" font-weight="bold" font-size="16.5" fill="#000" textLength="39.38" lengthAdjust="spacingAndGlyphs" xml:space="preserve">22.00</text>
<text x="303.50" y="1020.90" font-family="Liberation Sans" font-weight="bold" font-size="16.5" fill="#000" xml:space="preserve">2</text>
<text x="325.52" y="1020.90" font-family="Liberation Sans" font-weight="bold" font-size="16.5" fill="#000" textLength="98.55" lengthAdjust="spacingAndGlyphs" xml:space="preserve">KKandST011</text>
<text x="626.25" y="1020.90" font-family="Liberation Sans" font-weight="bold" font-size="16.5" fill="#000" textLength="39.43" lengthAdjust="spacingAndGlyphs" xml:space="preserve">4.695</text>
<text x="826.44" y="1020.90" font-family="Liberation Sans" font-weight="bold" font-size="16.5" fill="#000" textLength="143.61" lengthAdjust="spacingAndGlyphs" xml:space="preserve">Standard 1 - (8) Far</text>
<text x="1104.20" y="1020.90" font-family="Liberation Sans" font-weight="bold" font-size="16.5" fill="#000" textLength="39.38" lengthAdjust="spacingAndGlyphs" xml:space="preserve">44.80</text>
<text x="303.50" y="1043.90" font-family="Liberation Sans" font-weight="bold" font-size="16.5" fill="#000" xml:space="preserve">3</text>
<text x="325.52" y="1043.90" font-family="Liberation Sans" font-weight="bold" font-size="16.5" fill="#000" textLength="98.55" lengthAdjust="spacingAndGlyphs" xml:space="preserve">KKandST011</text>
<text x="626.25" y="1043.90" font-family="Liberation Sans" font-weight="bold" font-size="16.5" fill="#000" textLength="39.43" lengthAdjust="spacingAndGlyphs" xml:space="preserve">4.831</text>
<text x="826.44" y="1043.90" font-family="Liberation Sans" font-weight="bold" font-size="16.5" fill="#000" textLength="143.61" lengthAdjust="spacingAndGlyphs" xml:space="preserve">Standard 1 - (3) Far</text>
<text x="1104.20" y="1043.90" font-family="Liberation Sans" font-weight="bold" font-size="16.5" fill="#000" textLength="39.38" lengthAdjust="spacingAndGlyphs" xml:space="preserve">48.94</text>
<text x="303.50" y="1066.90" font-family="Liberation Sans" font-weight="bold" font-size="16.5" fill="#000" xml:space="preserve">4</text>
<text x="325.52" y="1066.90" font-family="Liberation Sans" font-weight="bold" font-size="16.5" fill="#000" textLength="98.55" lengthAdjust="spacingAndGlyphs" xml:space="preserve">KKandST011</text>
<text x="626.25" y="1066.90" font-family="Liberation Sans" font-weight="bold" font-size="16.5" fill="#000" textLength="39.43" lengthAdjust="spacingAndGlyphs" xml:space="preserve">4.967</text>
<text x="826.44" y="1066.90" font-family="Liberation Sans" font-weight="bold" font-size="16.5" fill="#000" textLength="143.61" lengthAdjust="spacingAndGlyphs" xml:space="preserve">Standard 1 - (2) Far</text>
<text x="1103.22" y="1066.90" font-family="Liberation Sans" font-weight="bold" font-size="16.5" fill="#000" textLength="40.37" lengthAdjust="spacingAndGlyphs" xml:space="preserve">58.83</text>
<text x="303.50" y="1089.90" font-family="Liberation Sans" font-weight="bold" font-size="16.5" fill="#000" xml:space="preserve">5</text>
<text x="325.52" y="1089.90" font-family="Liberation Sans" font-weight="bold" font-size="16.5" fill="#000" textLength="98.55" lengthAdjust="spacingAndGlyphs" xml:space="preserve">KKandST011</text>
<text x="625.27" y="1089.90" font-family="Liberation Sans" font-weight="bold" font-size="16.5" fill="#000" textLength="40.42" lengthAdjust="spacingAndGlyphs" xml:space="preserve">5.103</text>
<text x="826.44" y="1089.90" font-family="Liberation Sans" font-weight="bold" font-size="16.5" fill="#000" textLength="143.61" lengthAdjust="spacingAndGlyphs" xml:space="preserve">Standard 1 - (6) Far</text>
<text x="1103.22" y="1089.90" font-family="Liberation Sans" font-weight="bold" font-size="16.5" fill="#000" textLength="40.37" lengthAdjust="spacingAndGlyphs" xml:space="preserve">57.56</text>
<text x="303.50" y="1112.90" font-family="Liberation Sans" font-weight="bold" font-size="16.5" fill="#000" xml:space="preserve">6</text>
<text x="325.52" y="1112.90" font-family="Liberation Sans" font-weight="bold" font-size="16.5" fill="#000" textLength="98.55" lengthAdjust="spacingAndGlyphs" xml:space="preserve">KKandST011</text>
<text x="625.27" y="1112.90" font-family="Liberation Sans" font-weight="bold" font-size="16.5" fill="#000" textLength="40.42" lengthAdjust="spacingAndGlyphs" xml:space="preserve">5.239</text>
<text x="826.44" y="1112.90" font-family="Liberation Sans" font-weight="bold" font-size="16.5" fill="#000" textLength="143.61" lengthAdjust="spacingAndGlyphs" xml:space="preserve">Standard 1 - (6) Far</text>
<text x="1103.22" y="1112.90" font-family="Liberation Sans" font-weight="bold" font-size="16.5" fill="#000" textLength="40.37" lengthAdjust="spacingAndGlyphs" xml:space="preserve">63.62</text>
<text x="303.50" y="1135.90" font-family="Liberation Sans" font-weight="bold" font-size="16.5" fill="#000" xml:space="preserve">7</text>
<text x="325.52" y="1135.90" font-family="Liberation Sans" font-weight="bold" font-size="16.5" fill="#000" textLength="98.55" lengthAdjust="spacingAndGlyphs" xml:space="preserve">KKandST011</text>
<text x="625.27" y="1135.90" font-family="Liberation Sans" font-weight="bold" font-size="16.5" fill="#000" textLength="40.42" lengthAdjust="spacingAndGlyphs" xml:space="preserve">5.375</text>
<text x="826.44" y="1135.90" font-family="Liberation Sans" font-weight="bold" font-size="16.5" fill="#000" textLength="143.61" lengthAdjust="spacingAndGlyphs" xml:space="preserve">Standard 1 - (3) Far</text>
<text x="1103.22" y="1135.90" font-family="Liberation Sans" font-weight="bold" font-size="16.5" fill="#000" textLength="40.37" lengthAdjust="spacingAndGlyphs" xml:space="preserve">52.82</text>
<text x="303.50" y="1158.90" font-family="Liberation Sans" font-weight="bold" font-size="16.5" fill="#000" xml:space="preserve">8</text>
<text x="325.52" y="1158.90" font-family="Liberation Sans" font-weight="bold" font-size="16.5" fill="#000" textLength="98.55" lengthAdjust="spacingAndGlyphs" xml:space="preserve">KKandST011</text>
<text x="625.25" y="1158.90" font-family="Liberation Sans" font-weight="bold" font-size="16.5" fill="#000" textLength="40.55" lengthAdjust="spacingAndGlyphs" xml:space="preserve">5.511</text>
<text x="826.44" y="1158.90" font-family="Liberation Sans" font-weight="bold" font-size="16.5" fill="#000" textLength="143.61" lengthAdjust="spacingAndGlyphs" xml:space="preserve">Standard 1 - (3) Far</text>
<text x="1103.22" y="1158.90" font-family="Liberation Sans" font-weight="bold" font-size="16.5" fill="#000" textLength="40.37" lengthAdjust="spacingAndGlyphs" xml:space="preserve">53.86</text>
<text x="1287.85" y="1032.10" font-family="Liberation Serif" font-weight="bold" font-size="17.4" fill="#000" textLength="127.10" lengthAdjust="spacingAndGlyphs" xml:space="preserve">Matches/out of</text>
<text x="1321.81" y="1067.10" font-family="Liberation Serif" font-weight="bold" font-size="17.4" fill="#000" textLength="94.08" lengthAdjust="spacingAndGlyphs" xml:space="preserve">Max Match</text>
<text x="1292.80" y="1102.10" font-family="Liberation Serif" font-weight="bold" font-size="17.4" fill="#000" textLength="122.77" lengthAdjust="spacingAndGlyphs" xml:space="preserve">Average Match</text>
<text x="1326.33" y="1137.10" font-family="Liberation Serif" font-weight="bold" font-size="17.4" fill="#000" textLength="89.68" lengthAdjust="spacingAndGlyphs" xml:space="preserve">Min Match</text>
<text x="1471.75" y="1032.40" font-family="Liberation Sans" font-weight="bold" font-size="15.2" fill="#000" textLength="47.36" lengthAdjust="spacingAndGlyphs" xml:space="preserve">34 / 78</text>
<text x="1475.85" y="1067.40" font-family="Liberation Sans" font-weight="bold" font-size="15.2" fill="#000" textLength="38.72" lengthAdjust="spacingAndGlyphs" xml:space="preserve">63.62</text>
<text x="1475.85" y="1102.40" font-family="Liberation Sans" font-weight="bold" font-size="15.2" fill="#000" textLength="38.72" lengthAdjust="spacingAndGlyphs" xml:space="preserve">48.60</text>
<text x="1475.85" y="1137.40" font-family="Liberation Sans" font-weight="bold" font-size="15.2" fill="#000" textLength="38.72" lengthAdjust="spacingAndGlyphs" xml:space="preserve">22.00</text>
<text x="1567.91" y="1067.80" font-family="Liberation Serif" font-weight="bold" font-size="14.6" fill="#000" textLength="23.86" lengthAdjust="spacingAndGlyphs" xml:space="preserve">GD</text>
<text x="1567.91" y="1102.80" font-family="Liberation Serif" font-weight="bold" font-size="14.6" fill="#000" textLength="23.86" lengthAdjust="spacingAndGlyphs" xml:space="preserve">GD</text>
<text x="1567.91" y="1137.80" font-family="Liberation Serif" font-weight="bold" font-size="14.6" fill="#000" textLength="23.86" lengthAdjust="spacingAndGlyphs" xml:space="preserve">GD</text>
<text x="1643.16" y="1104.70" font-family="Liberation Sans" font-weight="bold" font-size="21" fill="#000" textLength="266.82" lengthAdjust="spacingAndGlyphs" xml:space="preserve">AbnormalSoundDetection.prmx</text>
<text x="1666.50" y="1145.80" font-family="Liberation Serif" font-weight="bold" font-size="18" fill="#000" textLength="135.27" lengthAdjust="spacingAndGlyphs" xml:space="preserve">Set Values Sub</text>
<text x="1864.20" y="1145.80" font-family="Liberation Serif" font-weight="bold" font-size="17" fill="#000" textLength="33.38" lengthAdjust="spacingAndGlyphs" xml:space="preserve">End</text></svg></body></html>
